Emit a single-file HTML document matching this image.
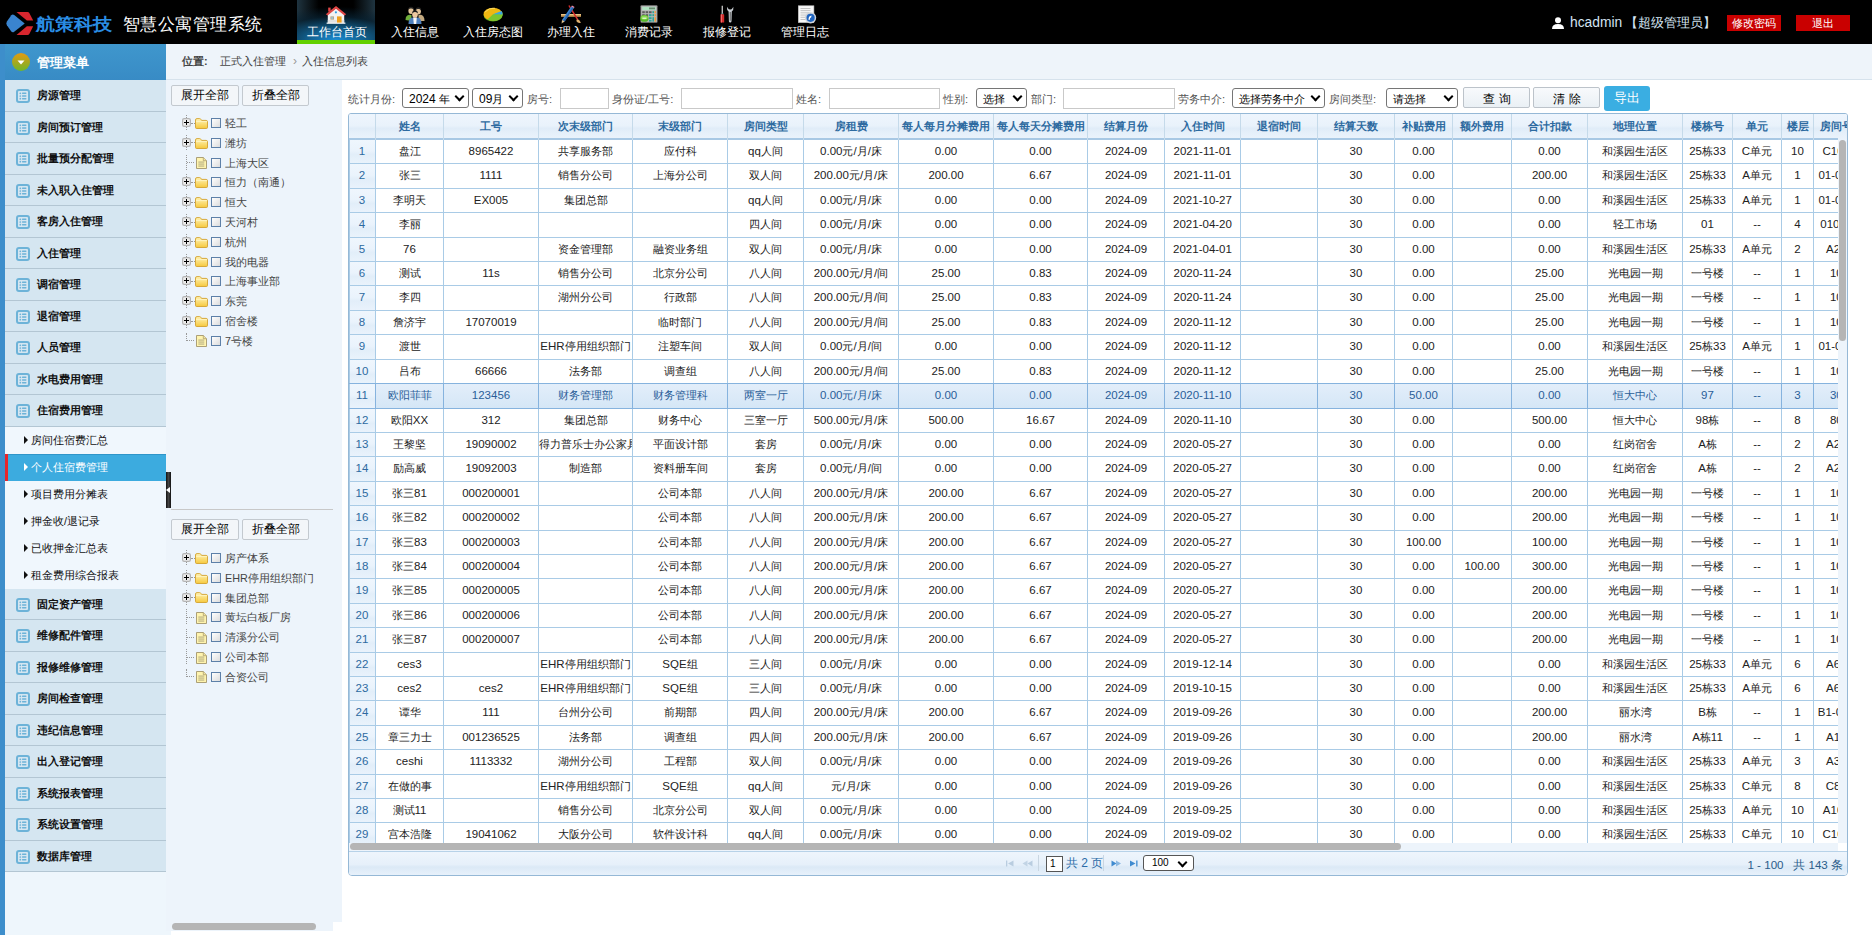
<!DOCTYPE html><html><head><meta charset="utf-8"><title>智慧公寓管理系统</title><style>
*{box-sizing:border-box;margin:0;padding:0}
html,body{width:1872px;height:935px;overflow:hidden;background:#fff}
body{position:relative;font-family:"Liberation Sans",sans-serif;font-size:10.8px;color:#000}
.a{position:absolute}
#hdr{left:0;top:0;width:1872px;height:44px;background:#000}
.logo{left:36px;top:12px;font-size:17.4px;transform:scaleX(1.115);transform-origin:0 50%;font-weight:bold;color:#2a8de4;letter-spacing:0px;line-height:24px;white-space:nowrap}
.title{left:122.5px;top:12px;font-size:17.45px;color:#fff;line-height:24px;white-space:nowrap;letter-spacing:0.5px}
.nav{top:0;height:44px;width:78px}
.nav .t{position:absolute;left:0.5px;width:78px;top:24.5px;text-align:center;color:#fff;font-size:12px;line-height:14px;white-space:nowrap}
.nav svg{position:absolute}
.navact{background:radial-gradient(ellipse 110% 75% at 50% 90%,#1a8ad0 0%,#115c88 35%,rgba(8,34,50,0.75) 70%,rgba(0,0,0,0) 100%),linear-gradient(to right,#1f3440 0%,#000 28%,#000 72%,#1f3440 100%)}
.navact:after{content:"";position:absolute;left:0;bottom:0;width:78px;height:4px;background:#63d000}
.user{top:14.5px;left:1570px;color:#d4e4f2;font-size:13.8px;line-height:16px;white-space:nowrap}
.rbtn{top:15px;height:16px;width:54px;background:#c90000;color:#fff;font-size:10.8px;line-height:16px;text-align:center}
#side{left:0;top:44px;width:166px;height:891px;background:#eef6fc}
#sidestrip{left:0;top:44px;width:5px;height:891px;background:#3d8ecb}
#sidehd{left:5px;top:44px;width:161px;height:36px;background:linear-gradient(#3f97cd,#388bc5)}
.mi{left:5px;width:161px;height:31.5px;background:#d5e6f1;border-bottom:1px solid #b3c6d3}
.mi .t{position:absolute;left:32px;top:0;line-height:30.5px;font-size:10.8px;font-weight:bold;color:#111;white-space:nowrap}
.mi .ic{position:absolute;left:11px;top:9px}
.mi .ic i{position:absolute;left:2px;height:1.4px;width:7px;background:#7fb6dc}
.si{left:5px;width:161px;height:27px;background:#f0f7fd}
.si .t{position:absolute;left:26px;top:0;line-height:27px;font-size:10.8px;color:#111;white-space:nowrap}
.si .ar{position:absolute;left:19px;top:9.5px;width:0;height:0;border-left:4px solid #111;border-top:4px solid transparent;border-bottom:4px solid transparent}
.si.act{background:#3cabdf;box-shadow:inset 0 1px 0 #2f95c9}
.si.act .t{color:#fff}
.si.act .ar{border-left-color:#fff}
.si.act:before{content:"";position:absolute;left:0;top:0;width:3px;height:27px;background:#e8242a}
#crumb{left:166px;top:44px;width:1706px;height:36px;background:#eef4fa;border-bottom:1px solid #d6e2ec}
#crumb span{position:absolute;top:0;line-height:35px;font-size:10.8px;color:#444;white-space:nowrap}
#tree{left:166px;top:80px;width:176px;height:842px;background:#edf4fb}
.tbtn{height:21px;border:1px solid #c3c9cf;border-radius:2px;background:#f3f6f9;font-size:11.8px;line-height:19px;text-align:center;color:#000;width:68px}
.tn{left:182px;height:20px;width:150px}
.tn .tx{position:absolute;left:43px;top:0;line-height:20px;font-size:10.8px;color:#444;white-space:nowrap}
.tn .cb{position:absolute;left:29px;top:5px;width:10px;height:10px;border:1.2px solid #5d80a8;background:linear-gradient(135deg,#ffffff,#dcdcdc)}
.tn .pl{position:absolute;left:0;top:5.5px;width:9px;height:9px;border:1px solid #bbb;border-radius:1.5px;background:#fff}
.tn .pl:before{content:"";position:absolute;left:1.5px;top:3.2px;width:4.5px;height:1px;background:#000}
.tn .pl:after{content:"";position:absolute;left:3.3px;top:1.5px;width:1px;height:4.5px;background:#000}
.fold{position:absolute;left:13px;top:5px;width:13px;height:10px;border-radius:1.5px;background:linear-gradient(#fff2a8,#f5cd4a);border:1px solid #d9a72e}
.fold:before{content:"";position:absolute;left:-1px;top:-3px;width:6px;height:3px;border-radius:1.5px 1.5px 0 0;background:#f9e27d;border:1px solid #d9a72e;border-bottom:none}
.leaf{position:absolute;left:14px;top:4px;width:10px;height:12px;background:#fff4b0;border:1px solid #b9a25a}
.leaf i{position:absolute;left:2px;width:5px;height:1px;background:#b9a25a}
.dv{position:absolute;border-left:1px dotted #999}
.dh{position:absolute;border-top:1px dotted #999}
#main{left:342px;top:80px;width:1530px;height:855px;background:#fff}
.lb{top:89px;line-height:20px;font-size:11.3px;color:#555;white-space:nowrap}
.sel{top:88px;height:20px;border:1px solid #767676;border-radius:3px;background:#fff;font-size:11.3px;line-height:21px;padding-left:6px;color:#000;white-space:nowrap;overflow:hidden}
.sel:after{content:"";position:absolute;right:5px;top:4px;width:5px;height:5px;border-right:2px solid #000;border-bottom:2px solid #000;transform:rotate(45deg)}
.inp{top:88px;height:21px;border:1px solid #c9c9c9;background:#fff}
.btn{top:87px;height:21px;border:1px solid #bcc3ca;border-radius:2px;background:linear-gradient(#f8fafc,#eaf0f5);font-size:11.6px;line-height:21px;text-align:center;color:#000;letter-spacing:4px;text-indent:4px}
#grid{left:348px;top:113px;width:1500px;height:763px;border:1px solid #95b8d6;border-radius:3px 3px 4px 4px;overflow:hidden;background:#fff}
.hc{position:absolute;top:0;height:26px;line-height:25px;text-align:center;font-weight:bold;color:#2d6aa0;font-size:10.8px;white-space:nowrap;overflow:hidden}
.c{position:absolute;height:24.4px;line-height:23px;text-align:center;font-size:10.8px;color:#222;white-space:nowrap;overflow:hidden}
.rn{color:#2d6aa0}
.l{font-size:1.065em}
</style></head><body>
<div id="hdr" class="a">
<svg class="a" style="left:0;top:0" width="36" height="44" viewBox="0 0 36 44">
<path d="M24.7 23.4 L14.2 15 Q12.6 13.8 11.3 15.2 L6.9 21.5 Q5.7 23.4 6.9 25.3 L11.3 31.6 Q12.6 33 14.2 31.8 Z" fill="#3a84cf"/>
<path d="M16.5 11.9 L27.6 11.9 Q28.7 11.9 29.3 12.9 L33.2 20.6 L26.9 20.6 Z" fill="#d8262e"/>
<path d="M16.5 34.9 L27.6 34.9 Q28.7 34.9 29.3 33.9 L33.2 26.2 L26.9 26.2 Z" fill="#d8262e"/>
</svg>
<div class="a logo">航策科技</div>
<div class="a title">智慧公寓管理系统</div>
<div class="a nav navact" style="left:297px"><svg style="left:28px;top:5px" width="22" height="19" viewBox="0 0 22 19">
 <path d="M2.8 9 L11 3.2 L19.2 9 L19.2 18 L2.8 18Z" fill="#f2f2f2"/>
 <path d="M2.8 15 L19.2 15 L19.2 18 L2.8 18Z" fill="#e2e2e2"/>
 <rect x="12" y="11.4" width="4.6" height="6.6" fill="#f0a01e"/>
 <rect x="5.4" y="11.4" width="3.6" height="3.2" fill="#b7a27c"/>
 <rect x="6.2" y="12.1" width="2" height="1.8" fill="#9cc3dc"/>
 <path d="M0.8 9.2 L11 1 L21.2 9.2 L19.4 10.4 L11 3.8 L2.6 10.4Z" fill="#e04645"/>
 <rect x="3.2" y="2.6" width="2.4" height="4" fill="#e04645"/>
 <circle cx="10.9" cy="7.3" r="1.1" fill="#2f9be0"/>
 <rect x="1.6" y="17.6" width="18.8" height="1.2" fill="#fafafa"/>
 </svg><div class="t">工作台首页</div></div>
<div class="a nav" style="left:375px"><svg style="left:30px;top:5px" width="20" height="19" viewBox="0 0 20 19">
 <path d="M0.5 15 Q0.5 10 4.5 9.8 L6.5 10 L6.5 16Z" fill="#6fae3a"/>
 <path d="M13.5 10 L16 9.8 Q19.5 10.5 19.5 16 L13.5 16Z" fill="#c4aa80"/>
 <ellipse cx="6" cy="5.8" rx="2.6" ry="3.2" fill="#e3c49a"/>
 <path d="M3.3 5 Q3.5 1.6 6 1.7 Q8.7 1.7 8.8 5 Q7.5 3.4 6 3.6 Q4.4 3.4 3.3 5Z" fill="#222"/>
 <ellipse cx="13.3" cy="6.3" rx="2.6" ry="3.2" fill="#e3c49a"/>
 <path d="M10.6 5.5 Q10.8 2.1 13.3 2.2 Q16 2.2 16.1 5.5 Q14.8 3.9 13.3 4.1 Q11.7 3.9 10.6 5.5Z" fill="#222"/>
 <path d="M3.5 19 Q3.5 13 7.5 12.5 L12.5 12.5 Q16.5 13 16.5 19Z" fill="#4f80bd"/>
 <path d="M8.2 12.6 L11.8 12.6 L11.2 19 L8.8 19Z" fill="#f6f6f6"/>
 <ellipse cx="10" cy="9.4" rx="2.8" ry="3.3" fill="#edc9a0"/>
 <path d="M7.1 8.6 Q7.2 5.1 10 5.2 Q12.8 5.1 12.9 8.6 Q11.6 6.9 10 7.1 Q8.4 6.9 7.1 8.6Z" fill="#1c1c1c"/>
 </svg><div class="t">入住信息</div></div>
<div class="a nav" style="left:453px"><svg style="left:30px;top:7px" width="20" height="15" viewBox="0 0 20 15">
 <ellipse cx="10" cy="8.3" rx="9.4" ry="6.2" fill="#4c9a1c"/>
 <ellipse cx="10" cy="7.2" rx="9.4" ry="6.5" fill="#f0b812"/>
 <path d="M10 7.2 L19.3 5.8 A9.4 6.5 0 0 1 17 12 A9.4 6.5 0 0 1 4.5 12.6 Z" fill="#7cc52e"/>
 <path d="M10 7.2 L18.6 4 A9.4 6.5 0 0 1 19.4 7.6 Z" fill="#3aa6e0"/>
 <path d="M2 5 Q6 0.5 12 1.2" stroke="#ffe680" stroke-width="1" fill="none" opacity="0.7"/>
 </svg><div class="t">入住房态图</div></div>
<div class="a nav" style="left:531px"><svg style="left:29px;top:5px" width="22" height="19" viewBox="0 0 22 19">
 <path d="M1 9 L21 9 L21 11.8 L1 11.8Z" fill="#c99a55"/>
 <path d="M1 9 L21 9 L21 10 L1 10Z" fill="#e8c488"/>
 <path d="M8.3 0.8 L9.6 0.2 L18.5 14.5 L17.2 15.3Z" fill="#d42b2b"/>
 <path d="M16.8 14.5 Q19.5 14 20.8 17.8 Q18 18.6 16.3 16Z" fill="#e0b070"/>
 <path d="M11.2 1.6 L13.8 3.1 L4.6 16.6 L2 15.1Z" fill="#3a86d4"/>
 <path d="M12.4 2.3 L13.8 3.1 L4.6 16.6 L3.3 15.8Z" fill="#2a62a8"/>
 <path d="M2 15.1 L4.6 16.6 L1.6 18.6Z" fill="#e8c890"/>
 <path d="M1.8 17.5 L2.6 18 L1.6 18.6Z" fill="#222"/>
 <path d="M11.2 1.6 L12 0.5 L14.6 2 L13.8 3.1Z" fill="#ee8aa8"/>
 </svg><div class="t">办理入住</div></div>
<div class="a nav" style="left:609px"><svg style="left:31px;top:5px" width="18" height="18" viewBox="0 0 18 18">
 <rect x="0.5" y="0.3" width="17" height="17.4" rx="1" fill="#8a8a8a"/>
 <rect x="1.3" y="1.1" width="15.4" height="15.8" fill="#b9b9b9"/>
 <rect x="2.2" y="1.9" width="13.6" height="3.2" fill="#aee0c0"/>
 <rect x="9" y="2.5" width="6" height="1.8" fill="#6a8a70"/>
 <g fill="#5c5c5c"><rect x="2.2" y="6.2" width="2.6" height="2"/><rect x="5.6" y="6.2" width="2.6" height="2"/><rect x="9" y="6.2" width="2.6" height="2"/><rect x="2.2" y="9.2" width="2.6" height="2"/><rect x="5.6" y="9.2" width="2.6" height="2"/></g>
 <g fill="#2aa39a"><rect x="12.4" y="6.2" width="1.6" height="2"/><rect x="9" y="9.2" width="2.6" height="2"/><rect x="9" y="12.2" width="2.6" height="2"/><rect x="9" y="15" width="2.6" height="1.6"/><rect x="12.4" y="9.2" width="1.6" height="2"/></g>
 <g fill="#f09a3a"><rect x="14.5" y="6.2" width="1.5" height="2"/><rect x="14.5" y="9.2" width="1.5" height="2"/><rect x="14.5" y="12.2" width="1.5" height="4.4"/><rect x="12.4" y="12.2" width="1.6" height="4.4" fill="#2aa39a"/></g>
 <ellipse cx="4.4" cy="13.4" rx="4.2" ry="3.4" fill="#58b82a"/>
 <ellipse cx="4.4" cy="12.6" rx="3.4" ry="2.2" fill="#8ad650"/>
 <rect x="2.4" y="12.6" width="4" height="1.2" fill="#e8ffe0"/>
 </svg><div class="t">消费记录</div></div>
<div class="a nav" style="left:687px"><svg style="left:32px;top:5px" width="17" height="18" viewBox="0 0 17 18">
 <rect x="2.6" y="0.8" width="1.4" height="8" fill="#9a9a9a"/>
 <rect x="2.9" y="0.8" width="0.6" height="8" fill="#d8d8d8"/>
 <rect x="1.9" y="8.6" width="2.8" height="0.8" fill="#3aa0a0"/>
 <rect x="1.4" y="9.3" width="3.8" height="8.2" rx="0.6" fill="#d32c2c"/>
 <rect x="2" y="9.3" width="1" height="8.2" fill="#ef6a6a"/>
 <path d="M8 1.8 Q7.6 5 9.6 6.4 L9.9 16.3 Q10 17.6 11.2 17.6 Q12.4 17.6 12.5 16.3 L12.8 6.4 Q14.8 5 14.4 1.8 L13.2 3.6 Q12.8 4.6 11.2 4.6 Q9.6 4.6 9.2 3.6Z" fill="#c8cdd2"/>
 <path d="M10.7 7 L11.7 7 L11.6 15.8 L10.8 15.8Z" fill="#555"/>
 </svg><div class="t">报修登记</div></div>
<div class="a nav" style="left:765px"><svg style="left:33px;top:5px" width="19" height="19" viewBox="0 0 19 19">
 <rect x="0.3" y="0.8" width="15.6" height="16.8" fill="#f8f8f8"/>
 <rect x="0.3" y="0.8" width="15.6" height="16.8" fill="none" stroke="#c4c4c4" stroke-width="0.6"/>
 <g fill="#bdbdbd"><rect x="2.5" y="3" width="10" height="0.9"/><rect x="2.5" y="5.2" width="10" height="0.9"/><rect x="2.5" y="7.4" width="9" height="0.9"/><rect x="2.5" y="9.6" width="6" height="0.9"/><rect x="2.5" y="11.8" width="5" height="0.9"/><rect x="2.5" y="14" width="5" height="0.9"/></g>
 <circle cx="12.6" cy="12.8" r="5.6" fill="#cfd3d8"/>
 <circle cx="12.6" cy="12.8" r="4.1" fill="#1f64c0"/>
 <path d="M10.6 15 Q10.2 11 13.6 10.6 L13.2 12.2 Q11.8 12.6 11.6 15Z" fill="#fff"/>
 </svg><div class="t">管理日志</div></div>
<svg class="a" style="left:1552px;top:17px" width="12" height="12" viewBox="0 0 12 12">
<circle cx="6" cy="3.3" r="3" fill="#fff"/><path d="M0 12 Q0 7 6 7 Q12 7 12 12Z" fill="#fff"/></svg>
<div class="a user">hcadmin</div><div class="a user" style="left:1625px;font-size:12.8px;top:14.5px">【超级管理员】</div>
<div class="a rbtn" style="left:1727px">修改密码</div>
<div class="a rbtn" style="left:1796px">退出</div>
</div>
<div id="side" class="a"></div><div id="sidestrip" class="a"></div>
<div id="sidehd" class="a"></div>
<svg class="a" style="left:12px;top:53px" width="18" height="18" viewBox="0 0 18 18">
<defs><linearGradient id="og" x1="0" y1="0" x2="0" y2="1"><stop offset="0" stop-color="#e39a12"/><stop offset="1" stop-color="#6fb62a"/></linearGradient></defs>
<circle cx="9" cy="9" r="9" fill="url(#og)"/><path d="M5.5 7.5 L12.5 7.5 L9 11.5Z" fill="#fff"/></svg>
<div class="a" style="left:37px;top:45px;line-height:36px;font-size:12.6px;font-weight:bold;color:#fff;white-space:nowrap">管理菜单</div>
<div class="a mi" style="top:80.0px"><svg class="ic" width="14" height="14" viewBox="0 0 14 14"><rect x="1" y="1" width="12" height="12" rx="2" fill="none" stroke="#6db3d8" stroke-width="2"/><g fill="#6db3d8"><circle cx="4.3" cy="4.3" r="0.85"/><circle cx="4.3" cy="7" r="0.85"/><circle cx="4.3" cy="9.7" r="0.85"/><rect x="5.9" y="3.6" width="4.6" height="1.4" rx="0.7"/><rect x="5.9" y="6.3" width="4.6" height="1.4" rx="0.7"/><rect x="5.9" y="9" width="4.6" height="1.4" rx="0.7"/></g></svg><div class="t">房源管理</div></div>
<div class="a mi" style="top:111.5px"><svg class="ic" width="14" height="14" viewBox="0 0 14 14"><rect x="1" y="1" width="12" height="12" rx="2" fill="none" stroke="#6db3d8" stroke-width="2"/><g fill="#6db3d8"><circle cx="4.3" cy="4.3" r="0.85"/><circle cx="4.3" cy="7" r="0.85"/><circle cx="4.3" cy="9.7" r="0.85"/><rect x="5.9" y="3.6" width="4.6" height="1.4" rx="0.7"/><rect x="5.9" y="6.3" width="4.6" height="1.4" rx="0.7"/><rect x="5.9" y="9" width="4.6" height="1.4" rx="0.7"/></g></svg><div class="t">房间预订管理</div></div>
<div class="a mi" style="top:143.0px"><svg class="ic" width="14" height="14" viewBox="0 0 14 14"><rect x="1" y="1" width="12" height="12" rx="2" fill="none" stroke="#6db3d8" stroke-width="2"/><g fill="#6db3d8"><circle cx="4.3" cy="4.3" r="0.85"/><circle cx="4.3" cy="7" r="0.85"/><circle cx="4.3" cy="9.7" r="0.85"/><rect x="5.9" y="3.6" width="4.6" height="1.4" rx="0.7"/><rect x="5.9" y="6.3" width="4.6" height="1.4" rx="0.7"/><rect x="5.9" y="9" width="4.6" height="1.4" rx="0.7"/></g></svg><div class="t">批量预分配管理</div></div>
<div class="a mi" style="top:174.5px"><svg class="ic" width="14" height="14" viewBox="0 0 14 14"><rect x="1" y="1" width="12" height="12" rx="2" fill="none" stroke="#6db3d8" stroke-width="2"/><g fill="#6db3d8"><circle cx="4.3" cy="4.3" r="0.85"/><circle cx="4.3" cy="7" r="0.85"/><circle cx="4.3" cy="9.7" r="0.85"/><rect x="5.9" y="3.6" width="4.6" height="1.4" rx="0.7"/><rect x="5.9" y="6.3" width="4.6" height="1.4" rx="0.7"/><rect x="5.9" y="9" width="4.6" height="1.4" rx="0.7"/></g></svg><div class="t">未入职入住管理</div></div>
<div class="a mi" style="top:206.0px"><svg class="ic" width="14" height="14" viewBox="0 0 14 14"><rect x="1" y="1" width="12" height="12" rx="2" fill="none" stroke="#6db3d8" stroke-width="2"/><g fill="#6db3d8"><circle cx="4.3" cy="4.3" r="0.85"/><circle cx="4.3" cy="7" r="0.85"/><circle cx="4.3" cy="9.7" r="0.85"/><rect x="5.9" y="3.6" width="4.6" height="1.4" rx="0.7"/><rect x="5.9" y="6.3" width="4.6" height="1.4" rx="0.7"/><rect x="5.9" y="9" width="4.6" height="1.4" rx="0.7"/></g></svg><div class="t">客房入住管理</div></div>
<div class="a mi" style="top:237.5px"><svg class="ic" width="14" height="14" viewBox="0 0 14 14"><rect x="1" y="1" width="12" height="12" rx="2" fill="none" stroke="#6db3d8" stroke-width="2"/><g fill="#6db3d8"><circle cx="4.3" cy="4.3" r="0.85"/><circle cx="4.3" cy="7" r="0.85"/><circle cx="4.3" cy="9.7" r="0.85"/><rect x="5.9" y="3.6" width="4.6" height="1.4" rx="0.7"/><rect x="5.9" y="6.3" width="4.6" height="1.4" rx="0.7"/><rect x="5.9" y="9" width="4.6" height="1.4" rx="0.7"/></g></svg><div class="t">入住管理</div></div>
<div class="a mi" style="top:269.0px"><svg class="ic" width="14" height="14" viewBox="0 0 14 14"><rect x="1" y="1" width="12" height="12" rx="2" fill="none" stroke="#6db3d8" stroke-width="2"/><g fill="#6db3d8"><circle cx="4.3" cy="4.3" r="0.85"/><circle cx="4.3" cy="7" r="0.85"/><circle cx="4.3" cy="9.7" r="0.85"/><rect x="5.9" y="3.6" width="4.6" height="1.4" rx="0.7"/><rect x="5.9" y="6.3" width="4.6" height="1.4" rx="0.7"/><rect x="5.9" y="9" width="4.6" height="1.4" rx="0.7"/></g></svg><div class="t">调宿管理</div></div>
<div class="a mi" style="top:300.5px"><svg class="ic" width="14" height="14" viewBox="0 0 14 14"><rect x="1" y="1" width="12" height="12" rx="2" fill="none" stroke="#6db3d8" stroke-width="2"/><g fill="#6db3d8"><circle cx="4.3" cy="4.3" r="0.85"/><circle cx="4.3" cy="7" r="0.85"/><circle cx="4.3" cy="9.7" r="0.85"/><rect x="5.9" y="3.6" width="4.6" height="1.4" rx="0.7"/><rect x="5.9" y="6.3" width="4.6" height="1.4" rx="0.7"/><rect x="5.9" y="9" width="4.6" height="1.4" rx="0.7"/></g></svg><div class="t">退宿管理</div></div>
<div class="a mi" style="top:332.0px"><svg class="ic" width="14" height="14" viewBox="0 0 14 14"><rect x="1" y="1" width="12" height="12" rx="2" fill="none" stroke="#6db3d8" stroke-width="2"/><g fill="#6db3d8"><circle cx="4.3" cy="4.3" r="0.85"/><circle cx="4.3" cy="7" r="0.85"/><circle cx="4.3" cy="9.7" r="0.85"/><rect x="5.9" y="3.6" width="4.6" height="1.4" rx="0.7"/><rect x="5.9" y="6.3" width="4.6" height="1.4" rx="0.7"/><rect x="5.9" y="9" width="4.6" height="1.4" rx="0.7"/></g></svg><div class="t">人员管理</div></div>
<div class="a mi" style="top:363.5px"><svg class="ic" width="14" height="14" viewBox="0 0 14 14"><rect x="1" y="1" width="12" height="12" rx="2" fill="none" stroke="#6db3d8" stroke-width="2"/><g fill="#6db3d8"><circle cx="4.3" cy="4.3" r="0.85"/><circle cx="4.3" cy="7" r="0.85"/><circle cx="4.3" cy="9.7" r="0.85"/><rect x="5.9" y="3.6" width="4.6" height="1.4" rx="0.7"/><rect x="5.9" y="6.3" width="4.6" height="1.4" rx="0.7"/><rect x="5.9" y="9" width="4.6" height="1.4" rx="0.7"/></g></svg><div class="t">水电费用管理</div></div>
<div class="a mi" style="top:395.0px"><svg class="ic" width="14" height="14" viewBox="0 0 14 14"><rect x="1" y="1" width="12" height="12" rx="2" fill="none" stroke="#6db3d8" stroke-width="2"/><g fill="#6db3d8"><circle cx="4.3" cy="4.3" r="0.85"/><circle cx="4.3" cy="7" r="0.85"/><circle cx="4.3" cy="9.7" r="0.85"/><rect x="5.9" y="3.6" width="4.6" height="1.4" rx="0.7"/><rect x="5.9" y="6.3" width="4.6" height="1.4" rx="0.7"/><rect x="5.9" y="9" width="4.6" height="1.4" rx="0.7"/></g></svg><div class="t">住宿费用管理</div></div>
<div class="a si" style="top:426.5px"><div class="ar"></div><div class="t">房间住宿费汇总</div></div>
<div class="a si act" style="top:453.5px"><div class="ar"></div><div class="t">个人住宿费管理</div></div>
<div class="a si" style="top:480.5px"><div class="ar"></div><div class="t">项目费用分摊表</div></div>
<div class="a si" style="top:507.5px"><div class="ar"></div><div class="t">押金收/退记录</div></div>
<div class="a si" style="top:534.5px"><div class="ar"></div><div class="t">已收押金汇总表</div></div>
<div class="a si" style="top:561.5px"><div class="ar"></div><div class="t">租金费用综合报表</div></div>
<div class="a mi" style="top:588.5px"><svg class="ic" width="14" height="14" viewBox="0 0 14 14"><rect x="1" y="1" width="12" height="12" rx="2" fill="none" stroke="#6db3d8" stroke-width="2"/><g fill="#6db3d8"><circle cx="4.3" cy="4.3" r="0.85"/><circle cx="4.3" cy="7" r="0.85"/><circle cx="4.3" cy="9.7" r="0.85"/><rect x="5.9" y="3.6" width="4.6" height="1.4" rx="0.7"/><rect x="5.9" y="6.3" width="4.6" height="1.4" rx="0.7"/><rect x="5.9" y="9" width="4.6" height="1.4" rx="0.7"/></g></svg><div class="t">固定资产管理</div></div>
<div class="a mi" style="top:620.0px"><svg class="ic" width="14" height="14" viewBox="0 0 14 14"><rect x="1" y="1" width="12" height="12" rx="2" fill="none" stroke="#6db3d8" stroke-width="2"/><g fill="#6db3d8"><circle cx="4.3" cy="4.3" r="0.85"/><circle cx="4.3" cy="7" r="0.85"/><circle cx="4.3" cy="9.7" r="0.85"/><rect x="5.9" y="3.6" width="4.6" height="1.4" rx="0.7"/><rect x="5.9" y="6.3" width="4.6" height="1.4" rx="0.7"/><rect x="5.9" y="9" width="4.6" height="1.4" rx="0.7"/></g></svg><div class="t">维修配件管理</div></div>
<div class="a mi" style="top:651.5px"><svg class="ic" width="14" height="14" viewBox="0 0 14 14"><rect x="1" y="1" width="12" height="12" rx="2" fill="none" stroke="#6db3d8" stroke-width="2"/><g fill="#6db3d8"><circle cx="4.3" cy="4.3" r="0.85"/><circle cx="4.3" cy="7" r="0.85"/><circle cx="4.3" cy="9.7" r="0.85"/><rect x="5.9" y="3.6" width="4.6" height="1.4" rx="0.7"/><rect x="5.9" y="6.3" width="4.6" height="1.4" rx="0.7"/><rect x="5.9" y="9" width="4.6" height="1.4" rx="0.7"/></g></svg><div class="t">报修维修管理</div></div>
<div class="a mi" style="top:683.0px"><svg class="ic" width="14" height="14" viewBox="0 0 14 14"><rect x="1" y="1" width="12" height="12" rx="2" fill="none" stroke="#6db3d8" stroke-width="2"/><g fill="#6db3d8"><circle cx="4.3" cy="4.3" r="0.85"/><circle cx="4.3" cy="7" r="0.85"/><circle cx="4.3" cy="9.7" r="0.85"/><rect x="5.9" y="3.6" width="4.6" height="1.4" rx="0.7"/><rect x="5.9" y="6.3" width="4.6" height="1.4" rx="0.7"/><rect x="5.9" y="9" width="4.6" height="1.4" rx="0.7"/></g></svg><div class="t">房间检查管理</div></div>
<div class="a mi" style="top:714.5px"><svg class="ic" width="14" height="14" viewBox="0 0 14 14"><rect x="1" y="1" width="12" height="12" rx="2" fill="none" stroke="#6db3d8" stroke-width="2"/><g fill="#6db3d8"><circle cx="4.3" cy="4.3" r="0.85"/><circle cx="4.3" cy="7" r="0.85"/><circle cx="4.3" cy="9.7" r="0.85"/><rect x="5.9" y="3.6" width="4.6" height="1.4" rx="0.7"/><rect x="5.9" y="6.3" width="4.6" height="1.4" rx="0.7"/><rect x="5.9" y="9" width="4.6" height="1.4" rx="0.7"/></g></svg><div class="t">违纪信息管理</div></div>
<div class="a mi" style="top:746.0px"><svg class="ic" width="14" height="14" viewBox="0 0 14 14"><rect x="1" y="1" width="12" height="12" rx="2" fill="none" stroke="#6db3d8" stroke-width="2"/><g fill="#6db3d8"><circle cx="4.3" cy="4.3" r="0.85"/><circle cx="4.3" cy="7" r="0.85"/><circle cx="4.3" cy="9.7" r="0.85"/><rect x="5.9" y="3.6" width="4.6" height="1.4" rx="0.7"/><rect x="5.9" y="6.3" width="4.6" height="1.4" rx="0.7"/><rect x="5.9" y="9" width="4.6" height="1.4" rx="0.7"/></g></svg><div class="t">出入登记管理</div></div>
<div class="a mi" style="top:777.5px"><svg class="ic" width="14" height="14" viewBox="0 0 14 14"><rect x="1" y="1" width="12" height="12" rx="2" fill="none" stroke="#6db3d8" stroke-width="2"/><g fill="#6db3d8"><circle cx="4.3" cy="4.3" r="0.85"/><circle cx="4.3" cy="7" r="0.85"/><circle cx="4.3" cy="9.7" r="0.85"/><rect x="5.9" y="3.6" width="4.6" height="1.4" rx="0.7"/><rect x="5.9" y="6.3" width="4.6" height="1.4" rx="0.7"/><rect x="5.9" y="9" width="4.6" height="1.4" rx="0.7"/></g></svg><div class="t">系统报表管理</div></div>
<div class="a mi" style="top:809.0px"><svg class="ic" width="14" height="14" viewBox="0 0 14 14"><rect x="1" y="1" width="12" height="12" rx="2" fill="none" stroke="#6db3d8" stroke-width="2"/><g fill="#6db3d8"><circle cx="4.3" cy="4.3" r="0.85"/><circle cx="4.3" cy="7" r="0.85"/><circle cx="4.3" cy="9.7" r="0.85"/><rect x="5.9" y="3.6" width="4.6" height="1.4" rx="0.7"/><rect x="5.9" y="6.3" width="4.6" height="1.4" rx="0.7"/><rect x="5.9" y="9" width="4.6" height="1.4" rx="0.7"/></g></svg><div class="t">系统设置管理</div></div>
<div class="a mi" style="top:840.5px"><svg class="ic" width="14" height="14" viewBox="0 0 14 14"><rect x="1" y="1" width="12" height="12" rx="2" fill="none" stroke="#6db3d8" stroke-width="2"/><g fill="#6db3d8"><circle cx="4.3" cy="4.3" r="0.85"/><circle cx="4.3" cy="7" r="0.85"/><circle cx="4.3" cy="9.7" r="0.85"/><rect x="5.9" y="3.6" width="4.6" height="1.4" rx="0.7"/><rect x="5.9" y="6.3" width="4.6" height="1.4" rx="0.7"/><rect x="5.9" y="9" width="4.6" height="1.4" rx="0.7"/></g></svg><div class="t">数据库管理</div></div>
<div id="crumb" class="a"><span style="left:16px;font-weight:bold;color:#444">位置:</span><span style="left:54px">正式入住管理</span><span style="left:127px;color:#999;font-size:12px">›</span><span style="left:136px">入住信息列表</span></div>
<div id="tree" class="a"></div>
<div class="a" style="left:166px;top:472px;width:5px;height:36px;background:linear-gradient(to right,#111,#444,#111)"></div>
<div class="a" style="left:166px;top:487px;width:0;height:0;border-right:4px solid #fff;border-top:3.5px solid transparent;border-bottom:3.5px solid transparent"></div>
<div class="a" style="left:171px;top:509px;width:162px;height:1px;background:#c8c8c8"></div>
<div class="a" style="left:166px;top:922px;width:167px;height:9px;background:#edf4fb"></div>
<div class="a" style="left:172px;top:923px;width:144px;height:7px;border-radius:4px;background:#b5b5b5"></div>
<div class="a" style="left:171px;top:931px;width:171px;height:4px;background:#fff"></div><div class="a" style="left:166px;top:931px;width:5px;height:4px;background:#eef6fc"></div>
<div class="a tbtn" style="left:171px;top:85px">展开全部</div>
<div class="a tbtn" style="left:242px;top:85px;width:67px">折叠全部</div>
<div class="a tbtn" style="left:171px;top:519px">展开全部</div>
<div class="a tbtn" style="left:242px;top:519px;width:67px">折叠全部</div>
<svg width="0" height="0" style="position:absolute"><defs><linearGradient id="fgr" x1="0" y1="0" x2="0" y2="1"><stop offset="0" stop-color="#fff4b8"/><stop offset="1" stop-color="#f6c93e"/></linearGradient></defs></svg>
<div class="a tn" style="top:113.00px"><svg class="a" style="left:0;top:5px" width="9" height="9" viewBox="0 0 9 9"><rect x="0.6" y="0.6" width="7.8" height="7.8" rx="1.6" fill="#ececec" stroke="#b4b4b4" stroke-width="1.2"/><rect x="2" y="4" width="5" height="1" fill="#000"/><rect x="4" y="2" width="1" height="5" fill="#000"/></svg><svg class="a" style="left:13px;top:4.8px" width="13" height="11" viewBox="0 0 13 11"><path d="M0.5 2 Q0.5 0.6 2 0.6 L4.6 0.6 Q5.6 0.6 6.1 1.6 L6.6 2.4 L11.2 2.4 Q12.5 2.4 12.5 3.8 L12.5 9.4 Q12.5 10.5 11.4 10.5 L1.6 10.5 Q0.5 10.5 0.5 9.4Z" fill="url(#fgr)" stroke="#d2a22e" stroke-width="0.9"/><path d="M1 3.6 L12 3.6" stroke="#fff6c8" stroke-width="0.8"/></svg><div class="cb"></div><div class="tx">轻工</div><div class="dv" style="left:4px;top:2px;height:3px"></div><div class="dv" style="left:4px;top:14px;height:3px"></div><div class="dh" style="left:9px;top:9.5px;width:4px"></div></div>
<div class="a tn" style="top:132.80px"><svg class="a" style="left:0;top:5px" width="9" height="9" viewBox="0 0 9 9"><rect x="0.6" y="0.6" width="7.8" height="7.8" rx="1.6" fill="#ececec" stroke="#b4b4b4" stroke-width="1.2"/><rect x="2" y="4" width="5" height="1" fill="#000"/><rect x="4" y="2" width="1" height="5" fill="#000"/></svg><svg class="a" style="left:13px;top:4.8px" width="13" height="11" viewBox="0 0 13 11"><path d="M0.5 2 Q0.5 0.6 2 0.6 L4.6 0.6 Q5.6 0.6 6.1 1.6 L6.6 2.4 L11.2 2.4 Q12.5 2.4 12.5 3.8 L12.5 9.4 Q12.5 10.5 11.4 10.5 L1.6 10.5 Q0.5 10.5 0.5 9.4Z" fill="url(#fgr)" stroke="#d2a22e" stroke-width="0.9"/><path d="M1 3.6 L12 3.6" stroke="#fff6c8" stroke-width="0.8"/></svg><div class="cb"></div><div class="tx">潍坊</div><div class="dv" style="left:4px;top:2px;height:3px"></div><div class="dv" style="left:4px;top:14px;height:3px"></div><div class="dh" style="left:9px;top:9.5px;width:4px"></div></div>
<div class="a tn" style="top:152.60px"><svg class="a" style="left:14px;top:4.5px" width="11" height="12" viewBox="0 0 11 12"><path d="M0.5 0.5 L7.3 0.5 L10.5 3.7 L10.5 11.5 L0.5 11.5Z" fill="#fff4ae" stroke="#a4966c" stroke-width="0.9"/><path d="M7.3 0.5 L7.3 3.7 L10.5 3.7" fill="#f3e6a0" stroke="#a4966c" stroke-width="0.7"/><g fill="#a8a07a"><rect x="2.3" y="4.6" width="6" height="0.9"/><rect x="2.3" y="6.6" width="6" height="0.9"/><rect x="2.3" y="8.6" width="6" height="0.9"/></g></svg><div class="cb"></div><div class="tx">上海大区</div><div class="dv" style="left:4px;top:2px;height:15px"></div><div class="dh" style="left:5px;top:9.5px;width:7px"></div></div>
<div class="a tn" style="top:172.40px"><svg class="a" style="left:0;top:5px" width="9" height="9" viewBox="0 0 9 9"><rect x="0.6" y="0.6" width="7.8" height="7.8" rx="1.6" fill="#ececec" stroke="#b4b4b4" stroke-width="1.2"/><rect x="2" y="4" width="5" height="1" fill="#000"/><rect x="4" y="2" width="1" height="5" fill="#000"/></svg><svg class="a" style="left:13px;top:4.8px" width="13" height="11" viewBox="0 0 13 11"><path d="M0.5 2 Q0.5 0.6 2 0.6 L4.6 0.6 Q5.6 0.6 6.1 1.6 L6.6 2.4 L11.2 2.4 Q12.5 2.4 12.5 3.8 L12.5 9.4 Q12.5 10.5 11.4 10.5 L1.6 10.5 Q0.5 10.5 0.5 9.4Z" fill="url(#fgr)" stroke="#d2a22e" stroke-width="0.9"/><path d="M1 3.6 L12 3.6" stroke="#fff6c8" stroke-width="0.8"/></svg><div class="cb"></div><div class="tx">恒力（南通）</div><div class="dv" style="left:4px;top:2px;height:3px"></div><div class="dv" style="left:4px;top:14px;height:3px"></div><div class="dh" style="left:9px;top:9.5px;width:4px"></div></div>
<div class="a tn" style="top:192.20px"><svg class="a" style="left:0;top:5px" width="9" height="9" viewBox="0 0 9 9"><rect x="0.6" y="0.6" width="7.8" height="7.8" rx="1.6" fill="#ececec" stroke="#b4b4b4" stroke-width="1.2"/><rect x="2" y="4" width="5" height="1" fill="#000"/><rect x="4" y="2" width="1" height="5" fill="#000"/></svg><svg class="a" style="left:13px;top:4.8px" width="13" height="11" viewBox="0 0 13 11"><path d="M0.5 2 Q0.5 0.6 2 0.6 L4.6 0.6 Q5.6 0.6 6.1 1.6 L6.6 2.4 L11.2 2.4 Q12.5 2.4 12.5 3.8 L12.5 9.4 Q12.5 10.5 11.4 10.5 L1.6 10.5 Q0.5 10.5 0.5 9.4Z" fill="url(#fgr)" stroke="#d2a22e" stroke-width="0.9"/><path d="M1 3.6 L12 3.6" stroke="#fff6c8" stroke-width="0.8"/></svg><div class="cb"></div><div class="tx">恒大</div><div class="dv" style="left:4px;top:2px;height:3px"></div><div class="dv" style="left:4px;top:14px;height:3px"></div><div class="dh" style="left:9px;top:9.5px;width:4px"></div></div>
<div class="a tn" style="top:212.00px"><svg class="a" style="left:0;top:5px" width="9" height="9" viewBox="0 0 9 9"><rect x="0.6" y="0.6" width="7.8" height="7.8" rx="1.6" fill="#ececec" stroke="#b4b4b4" stroke-width="1.2"/><rect x="2" y="4" width="5" height="1" fill="#000"/><rect x="4" y="2" width="1" height="5" fill="#000"/></svg><svg class="a" style="left:13px;top:4.8px" width="13" height="11" viewBox="0 0 13 11"><path d="M0.5 2 Q0.5 0.6 2 0.6 L4.6 0.6 Q5.6 0.6 6.1 1.6 L6.6 2.4 L11.2 2.4 Q12.5 2.4 12.5 3.8 L12.5 9.4 Q12.5 10.5 11.4 10.5 L1.6 10.5 Q0.5 10.5 0.5 9.4Z" fill="url(#fgr)" stroke="#d2a22e" stroke-width="0.9"/><path d="M1 3.6 L12 3.6" stroke="#fff6c8" stroke-width="0.8"/></svg><div class="cb"></div><div class="tx">天河村</div><div class="dv" style="left:4px;top:2px;height:3px"></div><div class="dv" style="left:4px;top:14px;height:3px"></div><div class="dh" style="left:9px;top:9.5px;width:4px"></div></div>
<div class="a tn" style="top:231.80px"><svg class="a" style="left:0;top:5px" width="9" height="9" viewBox="0 0 9 9"><rect x="0.6" y="0.6" width="7.8" height="7.8" rx="1.6" fill="#ececec" stroke="#b4b4b4" stroke-width="1.2"/><rect x="2" y="4" width="5" height="1" fill="#000"/><rect x="4" y="2" width="1" height="5" fill="#000"/></svg><svg class="a" style="left:13px;top:4.8px" width="13" height="11" viewBox="0 0 13 11"><path d="M0.5 2 Q0.5 0.6 2 0.6 L4.6 0.6 Q5.6 0.6 6.1 1.6 L6.6 2.4 L11.2 2.4 Q12.5 2.4 12.5 3.8 L12.5 9.4 Q12.5 10.5 11.4 10.5 L1.6 10.5 Q0.5 10.5 0.5 9.4Z" fill="url(#fgr)" stroke="#d2a22e" stroke-width="0.9"/><path d="M1 3.6 L12 3.6" stroke="#fff6c8" stroke-width="0.8"/></svg><div class="cb"></div><div class="tx">杭州</div><div class="dv" style="left:4px;top:2px;height:3px"></div><div class="dv" style="left:4px;top:14px;height:3px"></div><div class="dh" style="left:9px;top:9.5px;width:4px"></div></div>
<div class="a tn" style="top:251.60px"><svg class="a" style="left:0;top:5px" width="9" height="9" viewBox="0 0 9 9"><rect x="0.6" y="0.6" width="7.8" height="7.8" rx="1.6" fill="#ececec" stroke="#b4b4b4" stroke-width="1.2"/><rect x="2" y="4" width="5" height="1" fill="#000"/><rect x="4" y="2" width="1" height="5" fill="#000"/></svg><svg class="a" style="left:13px;top:4.8px" width="13" height="11" viewBox="0 0 13 11"><path d="M0.5 2 Q0.5 0.6 2 0.6 L4.6 0.6 Q5.6 0.6 6.1 1.6 L6.6 2.4 L11.2 2.4 Q12.5 2.4 12.5 3.8 L12.5 9.4 Q12.5 10.5 11.4 10.5 L1.6 10.5 Q0.5 10.5 0.5 9.4Z" fill="url(#fgr)" stroke="#d2a22e" stroke-width="0.9"/><path d="M1 3.6 L12 3.6" stroke="#fff6c8" stroke-width="0.8"/></svg><div class="cb"></div><div class="tx">我的电器</div><div class="dv" style="left:4px;top:2px;height:3px"></div><div class="dv" style="left:4px;top:14px;height:3px"></div><div class="dh" style="left:9px;top:9.5px;width:4px"></div></div>
<div class="a tn" style="top:271.40px"><svg class="a" style="left:0;top:5px" width="9" height="9" viewBox="0 0 9 9"><rect x="0.6" y="0.6" width="7.8" height="7.8" rx="1.6" fill="#ececec" stroke="#b4b4b4" stroke-width="1.2"/><rect x="2" y="4" width="5" height="1" fill="#000"/><rect x="4" y="2" width="1" height="5" fill="#000"/></svg><svg class="a" style="left:13px;top:4.8px" width="13" height="11" viewBox="0 0 13 11"><path d="M0.5 2 Q0.5 0.6 2 0.6 L4.6 0.6 Q5.6 0.6 6.1 1.6 L6.6 2.4 L11.2 2.4 Q12.5 2.4 12.5 3.8 L12.5 9.4 Q12.5 10.5 11.4 10.5 L1.6 10.5 Q0.5 10.5 0.5 9.4Z" fill="url(#fgr)" stroke="#d2a22e" stroke-width="0.9"/><path d="M1 3.6 L12 3.6" stroke="#fff6c8" stroke-width="0.8"/></svg><div class="cb"></div><div class="tx">上海事业部</div><div class="dv" style="left:4px;top:2px;height:3px"></div><div class="dv" style="left:4px;top:14px;height:3px"></div><div class="dh" style="left:9px;top:9.5px;width:4px"></div></div>
<div class="a tn" style="top:291.20px"><svg class="a" style="left:0;top:5px" width="9" height="9" viewBox="0 0 9 9"><rect x="0.6" y="0.6" width="7.8" height="7.8" rx="1.6" fill="#ececec" stroke="#b4b4b4" stroke-width="1.2"/><rect x="2" y="4" width="5" height="1" fill="#000"/><rect x="4" y="2" width="1" height="5" fill="#000"/></svg><svg class="a" style="left:13px;top:4.8px" width="13" height="11" viewBox="0 0 13 11"><path d="M0.5 2 Q0.5 0.6 2 0.6 L4.6 0.6 Q5.6 0.6 6.1 1.6 L6.6 2.4 L11.2 2.4 Q12.5 2.4 12.5 3.8 L12.5 9.4 Q12.5 10.5 11.4 10.5 L1.6 10.5 Q0.5 10.5 0.5 9.4Z" fill="url(#fgr)" stroke="#d2a22e" stroke-width="0.9"/><path d="M1 3.6 L12 3.6" stroke="#fff6c8" stroke-width="0.8"/></svg><div class="cb"></div><div class="tx">东莞</div><div class="dv" style="left:4px;top:2px;height:3px"></div><div class="dv" style="left:4px;top:14px;height:3px"></div><div class="dh" style="left:9px;top:9.5px;width:4px"></div></div>
<div class="a tn" style="top:311.00px"><svg class="a" style="left:0;top:5px" width="9" height="9" viewBox="0 0 9 9"><rect x="0.6" y="0.6" width="7.8" height="7.8" rx="1.6" fill="#ececec" stroke="#b4b4b4" stroke-width="1.2"/><rect x="2" y="4" width="5" height="1" fill="#000"/><rect x="4" y="2" width="1" height="5" fill="#000"/></svg><svg class="a" style="left:13px;top:4.8px" width="13" height="11" viewBox="0 0 13 11"><path d="M0.5 2 Q0.5 0.6 2 0.6 L4.6 0.6 Q5.6 0.6 6.1 1.6 L6.6 2.4 L11.2 2.4 Q12.5 2.4 12.5 3.8 L12.5 9.4 Q12.5 10.5 11.4 10.5 L1.6 10.5 Q0.5 10.5 0.5 9.4Z" fill="url(#fgr)" stroke="#d2a22e" stroke-width="0.9"/><path d="M1 3.6 L12 3.6" stroke="#fff6c8" stroke-width="0.8"/></svg><div class="cb"></div><div class="tx">宿舍楼</div><div class="dv" style="left:4px;top:2px;height:3px"></div><div class="dv" style="left:4px;top:14px;height:3px"></div><div class="dh" style="left:9px;top:9.5px;width:4px"></div></div>
<div class="a tn" style="top:330.80px"><svg class="a" style="left:14px;top:4.5px" width="11" height="12" viewBox="0 0 11 12"><path d="M0.5 0.5 L7.3 0.5 L10.5 3.7 L10.5 11.5 L0.5 11.5Z" fill="#fff4ae" stroke="#a4966c" stroke-width="0.9"/><path d="M7.3 0.5 L7.3 3.7 L10.5 3.7" fill="#f3e6a0" stroke="#a4966c" stroke-width="0.7"/><g fill="#a8a07a"><rect x="2.3" y="4.6" width="6" height="0.9"/><rect x="2.3" y="6.6" width="6" height="0.9"/><rect x="2.3" y="8.6" width="6" height="0.9"/></g></svg><div class="cb"></div><div class="tx">7号楼</div><div class="dv" style="left:4px;top:2px;height:8px"></div><div class="dh" style="left:5px;top:9.5px;width:7px"></div></div>
<div class="a tn" style="top:548.00px"><svg class="a" style="left:0;top:5px" width="9" height="9" viewBox="0 0 9 9"><rect x="0.6" y="0.6" width="7.8" height="7.8" rx="1.6" fill="#ececec" stroke="#b4b4b4" stroke-width="1.2"/><rect x="2" y="4" width="5" height="1" fill="#000"/><rect x="4" y="2" width="1" height="5" fill="#000"/></svg><svg class="a" style="left:13px;top:4.8px" width="13" height="11" viewBox="0 0 13 11"><path d="M0.5 2 Q0.5 0.6 2 0.6 L4.6 0.6 Q5.6 0.6 6.1 1.6 L6.6 2.4 L11.2 2.4 Q12.5 2.4 12.5 3.8 L12.5 9.4 Q12.5 10.5 11.4 10.5 L1.6 10.5 Q0.5 10.5 0.5 9.4Z" fill="url(#fgr)" stroke="#d2a22e" stroke-width="0.9"/><path d="M1 3.6 L12 3.6" stroke="#fff6c8" stroke-width="0.8"/></svg><div class="cb"></div><div class="tx">房产体系</div><div class="dv" style="left:4px;top:2px;height:3px"></div><div class="dv" style="left:4px;top:14px;height:3px"></div><div class="dh" style="left:9px;top:9.5px;width:4px"></div></div>
<div class="a tn" style="top:567.80px"><svg class="a" style="left:0;top:5px" width="9" height="9" viewBox="0 0 9 9"><rect x="0.6" y="0.6" width="7.8" height="7.8" rx="1.6" fill="#ececec" stroke="#b4b4b4" stroke-width="1.2"/><rect x="2" y="4" width="5" height="1" fill="#000"/><rect x="4" y="2" width="1" height="5" fill="#000"/></svg><svg class="a" style="left:13px;top:4.8px" width="13" height="11" viewBox="0 0 13 11"><path d="M0.5 2 Q0.5 0.6 2 0.6 L4.6 0.6 Q5.6 0.6 6.1 1.6 L6.6 2.4 L11.2 2.4 Q12.5 2.4 12.5 3.8 L12.5 9.4 Q12.5 10.5 11.4 10.5 L1.6 10.5 Q0.5 10.5 0.5 9.4Z" fill="url(#fgr)" stroke="#d2a22e" stroke-width="0.9"/><path d="M1 3.6 L12 3.6" stroke="#fff6c8" stroke-width="0.8"/></svg><div class="cb"></div><div class="tx">EHR停用组织部门</div><div class="dv" style="left:4px;top:2px;height:3px"></div><div class="dv" style="left:4px;top:14px;height:3px"></div><div class="dh" style="left:9px;top:9.5px;width:4px"></div></div>
<div class="a tn" style="top:587.60px"><svg class="a" style="left:0;top:5px" width="9" height="9" viewBox="0 0 9 9"><rect x="0.6" y="0.6" width="7.8" height="7.8" rx="1.6" fill="#ececec" stroke="#b4b4b4" stroke-width="1.2"/><rect x="2" y="4" width="5" height="1" fill="#000"/><rect x="4" y="2" width="1" height="5" fill="#000"/></svg><svg class="a" style="left:13px;top:4.8px" width="13" height="11" viewBox="0 0 13 11"><path d="M0.5 2 Q0.5 0.6 2 0.6 L4.6 0.6 Q5.6 0.6 6.1 1.6 L6.6 2.4 L11.2 2.4 Q12.5 2.4 12.5 3.8 L12.5 9.4 Q12.5 10.5 11.4 10.5 L1.6 10.5 Q0.5 10.5 0.5 9.4Z" fill="url(#fgr)" stroke="#d2a22e" stroke-width="0.9"/><path d="M1 3.6 L12 3.6" stroke="#fff6c8" stroke-width="0.8"/></svg><div class="cb"></div><div class="tx">集团总部</div><div class="dv" style="left:4px;top:2px;height:3px"></div><div class="dv" style="left:4px;top:14px;height:3px"></div><div class="dh" style="left:9px;top:9.5px;width:4px"></div></div>
<div class="a tn" style="top:607.40px"><svg class="a" style="left:14px;top:4.5px" width="11" height="12" viewBox="0 0 11 12"><path d="M0.5 0.5 L7.3 0.5 L10.5 3.7 L10.5 11.5 L0.5 11.5Z" fill="#fff4ae" stroke="#a4966c" stroke-width="0.9"/><path d="M7.3 0.5 L7.3 3.7 L10.5 3.7" fill="#f3e6a0" stroke="#a4966c" stroke-width="0.7"/><g fill="#a8a07a"><rect x="2.3" y="4.6" width="6" height="0.9"/><rect x="2.3" y="6.6" width="6" height="0.9"/><rect x="2.3" y="8.6" width="6" height="0.9"/></g></svg><div class="cb"></div><div class="tx">黄坛白板厂房</div><div class="dv" style="left:4px;top:2px;height:15px"></div><div class="dh" style="left:5px;top:9.5px;width:7px"></div></div>
<div class="a tn" style="top:627.20px"><svg class="a" style="left:14px;top:4.5px" width="11" height="12" viewBox="0 0 11 12"><path d="M0.5 0.5 L7.3 0.5 L10.5 3.7 L10.5 11.5 L0.5 11.5Z" fill="#fff4ae" stroke="#a4966c" stroke-width="0.9"/><path d="M7.3 0.5 L7.3 3.7 L10.5 3.7" fill="#f3e6a0" stroke="#a4966c" stroke-width="0.7"/><g fill="#a8a07a"><rect x="2.3" y="4.6" width="6" height="0.9"/><rect x="2.3" y="6.6" width="6" height="0.9"/><rect x="2.3" y="8.6" width="6" height="0.9"/></g></svg><div class="cb"></div><div class="tx">清溪分公司</div><div class="dv" style="left:4px;top:2px;height:15px"></div><div class="dh" style="left:5px;top:9.5px;width:7px"></div></div>
<div class="a tn" style="top:647.00px"><svg class="a" style="left:14px;top:4.5px" width="11" height="12" viewBox="0 0 11 12"><path d="M0.5 0.5 L7.3 0.5 L10.5 3.7 L10.5 11.5 L0.5 11.5Z" fill="#fff4ae" stroke="#a4966c" stroke-width="0.9"/><path d="M7.3 0.5 L7.3 3.7 L10.5 3.7" fill="#f3e6a0" stroke="#a4966c" stroke-width="0.7"/><g fill="#a8a07a"><rect x="2.3" y="4.6" width="6" height="0.9"/><rect x="2.3" y="6.6" width="6" height="0.9"/><rect x="2.3" y="8.6" width="6" height="0.9"/></g></svg><div class="cb"></div><div class="tx">公司本部</div><div class="dv" style="left:4px;top:2px;height:15px"></div><div class="dh" style="left:5px;top:9.5px;width:7px"></div></div>
<div class="a tn" style="top:666.80px"><svg class="a" style="left:14px;top:4.5px" width="11" height="12" viewBox="0 0 11 12"><path d="M0.5 0.5 L7.3 0.5 L10.5 3.7 L10.5 11.5 L0.5 11.5Z" fill="#fff4ae" stroke="#a4966c" stroke-width="0.9"/><path d="M7.3 0.5 L7.3 3.7 L10.5 3.7" fill="#f3e6a0" stroke="#a4966c" stroke-width="0.7"/><g fill="#a8a07a"><rect x="2.3" y="4.6" width="6" height="0.9"/><rect x="2.3" y="6.6" width="6" height="0.9"/><rect x="2.3" y="8.6" width="6" height="0.9"/></g></svg><div class="cb"></div><div class="tx">合资公司</div><div class="dv" style="left:4px;top:2px;height:8px"></div><div class="dh" style="left:5px;top:9.5px;width:7px"></div></div>
<div id="main" class="a"></div>
<div class="a lb" style="left:348px">统计月份:</div>
<div class="a sel" style="left:402px;width:67px"><span class="l">2024</span> 年</div>
<div class="a sel" style="left:472px;width:51px"><span class="l">09</span>月</div>
<div class="a lb" style="left:527px">房号:</div>
<div class="a inp" style="left:560px;width:49px"></div>
<div class="a lb" style="left:612px">身份证/工号:</div>
<div class="a inp" style="left:681px;width:112px"></div>
<div class="a lb" style="left:796px">姓名:</div>
<div class="a inp" style="left:829px;width:111px"></div>
<div class="a lb" style="left:943px">性别:</div>
<div class="a sel" style="left:976px;width:51px">选择</div>
<div class="a lb" style="left:1031px">部门:</div>
<div class="a inp" style="left:1063px;width:112px"></div>
<div class="a lb" style="left:1178px">劳务中介:</div>
<div class="a sel" style="left:1232px;width:93px">选择劳务中介</div>
<div class="a lb" style="left:1329px">房间类型:</div>
<div class="a sel" style="left:1386px;width:72px">请选择</div>
<div class="a btn" style="left:1463px;width:67px">查询</div>
<div class="a btn" style="left:1533px;width:67px">清除</div>
<div class="a" style="left:1604px;top:86px;width:46px;height:25px;border-radius:3px;background:#3aaee2;color:#fff;font-size:12.6px;line-height:25px;text-align:center">导出</div>
<div id="grid" class="a"><div class="a" style="left:0;top:0;width:1500px;height:26px;background:linear-gradient(#eef5fd 0%,#e9f2fb 45%,#e0ecf8 55%,#e6f0fa 75%,#ebf3fc 100%)"></div><div class="a" style="left:0;top:26.0px;width:1489px;height:703.0px;overflow:hidden"><div class="a" style="left:0;top:0;width:26px;height:703.0px;background:#eaf3fb"></div><div class="a" style="left:0;top:0.00px;width:26px;height:24.41px;background:linear-gradient(#eff6fd 0%,#eaf3fc 45%,#e2eef9 60%,#eaf3fc 100%)"></div><div class="a" style="left:0;top:24.41px;width:26px;height:24.41px;background:linear-gradient(#eff6fd 0%,#eaf3fc 45%,#e2eef9 60%,#eaf3fc 100%)"></div><div class="a" style="left:0;top:48.82px;width:26px;height:24.41px;background:linear-gradient(#eff6fd 0%,#eaf3fc 45%,#e2eef9 60%,#eaf3fc 100%)"></div><div class="a" style="left:0;top:73.23px;width:26px;height:24.41px;background:linear-gradient(#eff6fd 0%,#eaf3fc 45%,#e2eef9 60%,#eaf3fc 100%)"></div><div class="a" style="left:0;top:97.64px;width:26px;height:24.41px;background:linear-gradient(#eff6fd 0%,#eaf3fc 45%,#e2eef9 60%,#eaf3fc 100%)"></div><div class="a" style="left:0;top:122.05px;width:26px;height:24.41px;background:linear-gradient(#eff6fd 0%,#eaf3fc 45%,#e2eef9 60%,#eaf3fc 100%)"></div><div class="a" style="left:0;top:146.46px;width:26px;height:24.41px;background:linear-gradient(#eff6fd 0%,#eaf3fc 45%,#e2eef9 60%,#eaf3fc 100%)"></div><div class="a" style="left:0;top:170.87px;width:26px;height:24.41px;background:linear-gradient(#eff6fd 0%,#eaf3fc 45%,#e2eef9 60%,#eaf3fc 100%)"></div><div class="a" style="left:0;top:195.28px;width:26px;height:24.41px;background:linear-gradient(#eff6fd 0%,#eaf3fc 45%,#e2eef9 60%,#eaf3fc 100%)"></div><div class="a" style="left:0;top:219.69px;width:26px;height:24.41px;background:linear-gradient(#eff6fd 0%,#eaf3fc 45%,#e2eef9 60%,#eaf3fc 100%)"></div><div class="a" style="left:0;top:244.10px;width:26px;height:24.41px;background:linear-gradient(#eff6fd 0%,#eaf3fc 45%,#e2eef9 60%,#eaf3fc 100%)"></div><div class="a" style="left:0;top:268.51px;width:26px;height:24.41px;background:linear-gradient(#eff6fd 0%,#eaf3fc 45%,#e2eef9 60%,#eaf3fc 100%)"></div><div class="a" style="left:0;top:292.92px;width:26px;height:24.41px;background:linear-gradient(#eff6fd 0%,#eaf3fc 45%,#e2eef9 60%,#eaf3fc 100%)"></div><div class="a" style="left:0;top:317.33px;width:26px;height:24.41px;background:linear-gradient(#eff6fd 0%,#eaf3fc 45%,#e2eef9 60%,#eaf3fc 100%)"></div><div class="a" style="left:0;top:341.74px;width:26px;height:24.41px;background:linear-gradient(#eff6fd 0%,#eaf3fc 45%,#e2eef9 60%,#eaf3fc 100%)"></div><div class="a" style="left:0;top:366.15px;width:26px;height:24.41px;background:linear-gradient(#eff6fd 0%,#eaf3fc 45%,#e2eef9 60%,#eaf3fc 100%)"></div><div class="a" style="left:0;top:390.56px;width:26px;height:24.41px;background:linear-gradient(#eff6fd 0%,#eaf3fc 45%,#e2eef9 60%,#eaf3fc 100%)"></div><div class="a" style="left:0;top:414.97px;width:26px;height:24.41px;background:linear-gradient(#eff6fd 0%,#eaf3fc 45%,#e2eef9 60%,#eaf3fc 100%)"></div><div class="a" style="left:0;top:439.38px;width:26px;height:24.41px;background:linear-gradient(#eff6fd 0%,#eaf3fc 45%,#e2eef9 60%,#eaf3fc 100%)"></div><div class="a" style="left:0;top:463.79px;width:26px;height:24.41px;background:linear-gradient(#eff6fd 0%,#eaf3fc 45%,#e2eef9 60%,#eaf3fc 100%)"></div><div class="a" style="left:0;top:488.20px;width:26px;height:24.41px;background:linear-gradient(#eff6fd 0%,#eaf3fc 45%,#e2eef9 60%,#eaf3fc 100%)"></div><div class="a" style="left:0;top:512.61px;width:26px;height:24.41px;background:linear-gradient(#eff6fd 0%,#eaf3fc 45%,#e2eef9 60%,#eaf3fc 100%)"></div><div class="a" style="left:0;top:537.02px;width:26px;height:24.41px;background:linear-gradient(#eff6fd 0%,#eaf3fc 45%,#e2eef9 60%,#eaf3fc 100%)"></div><div class="a" style="left:0;top:561.43px;width:26px;height:24.41px;background:linear-gradient(#eff6fd 0%,#eaf3fc 45%,#e2eef9 60%,#eaf3fc 100%)"></div><div class="a" style="left:0;top:585.84px;width:26px;height:24.41px;background:linear-gradient(#eff6fd 0%,#eaf3fc 45%,#e2eef9 60%,#eaf3fc 100%)"></div><div class="a" style="left:0;top:610.25px;width:26px;height:24.41px;background:linear-gradient(#eff6fd 0%,#eaf3fc 45%,#e2eef9 60%,#eaf3fc 100%)"></div><div class="a" style="left:0;top:634.66px;width:26px;height:24.41px;background:linear-gradient(#eff6fd 0%,#eaf3fc 45%,#e2eef9 60%,#eaf3fc 100%)"></div><div class="a" style="left:0;top:659.07px;width:26px;height:24.41px;background:linear-gradient(#eff6fd 0%,#eaf3fc 45%,#e2eef9 60%,#eaf3fc 100%)"></div><div class="a" style="left:0;top:683.48px;width:26px;height:24.41px;background:linear-gradient(#eff6fd 0%,#eaf3fc 45%,#e2eef9 60%,#eaf3fc 100%)"></div><div class="a" style="left:0;top:707.89px;width:26px;height:24.41px;background:linear-gradient(#eff6fd 0%,#eaf3fc 45%,#e2eef9 60%,#eaf3fc 100%)"></div><div class="a" style="left:0;top:0;width:1px;height:703.0px;background:#a9cbe6"></div><div class="a" style="left:27px;top:244.10px;width:1500px;height:24.41px;background:linear-gradient(#e3eefa,#d4e6f6)"></div><div class="a" style="left:0;top:243.10px;width:1500px;height:1px;background:#86b3de"></div><div class="a" style="left:0;top:267.51px;width:1500px;height:1px;background:#86b3de"></div><div class="a" style="left:0;top:23.41px;width:1500px;height:1px;background:#a9cbe6"></div><div class="a" style="left:0;top:47.82px;width:1500px;height:1px;background:#a9cbe6"></div><div class="a" style="left:0;top:72.23px;width:1500px;height:1px;background:#a9cbe6"></div><div class="a" style="left:0;top:96.64px;width:1500px;height:1px;background:#a9cbe6"></div><div class="a" style="left:0;top:121.05px;width:1500px;height:1px;background:#a9cbe6"></div><div class="a" style="left:0;top:145.46px;width:1500px;height:1px;background:#a9cbe6"></div><div class="a" style="left:0;top:169.87px;width:1500px;height:1px;background:#a9cbe6"></div><div class="a" style="left:0;top:194.28px;width:1500px;height:1px;background:#a9cbe6"></div><div class="a" style="left:0;top:218.69px;width:1500px;height:1px;background:#a9cbe6"></div><div class="a" style="left:0;top:291.92px;width:1500px;height:1px;background:#a9cbe6"></div><div class="a" style="left:0;top:316.33px;width:1500px;height:1px;background:#a9cbe6"></div><div class="a" style="left:0;top:340.74px;width:1500px;height:1px;background:#a9cbe6"></div><div class="a" style="left:0;top:365.15px;width:1500px;height:1px;background:#a9cbe6"></div><div class="a" style="left:0;top:389.56px;width:1500px;height:1px;background:#a9cbe6"></div><div class="a" style="left:0;top:413.97px;width:1500px;height:1px;background:#a9cbe6"></div><div class="a" style="left:0;top:438.38px;width:1500px;height:1px;background:#a9cbe6"></div><div class="a" style="left:0;top:462.79px;width:1500px;height:1px;background:#a9cbe6"></div><div class="a" style="left:0;top:487.20px;width:1500px;height:1px;background:#a9cbe6"></div><div class="a" style="left:0;top:511.61px;width:1500px;height:1px;background:#a9cbe6"></div><div class="a" style="left:0;top:536.02px;width:1500px;height:1px;background:#a9cbe6"></div><div class="a" style="left:0;top:560.43px;width:1500px;height:1px;background:#a9cbe6"></div><div class="a" style="left:0;top:584.84px;width:1500px;height:1px;background:#a9cbe6"></div><div class="a" style="left:0;top:609.25px;width:1500px;height:1px;background:#a9cbe6"></div><div class="a" style="left:0;top:633.66px;width:1500px;height:1px;background:#a9cbe6"></div><div class="a" style="left:0;top:658.07px;width:1500px;height:1px;background:#a9cbe6"></div><div class="a" style="left:0;top:682.48px;width:1500px;height:1px;background:#a9cbe6"></div><div class="a" style="left:0;top:706.89px;width:1500px;height:1px;background:#a9cbe6"></div><div class="a" style="left:26px;top:0;width:1px;height:703.0px;background:#a9cbe6"></div><div class="a" style="left:26px;top:243.10px;width:1px;height:25.41px;background:#86b3de"></div><div class="a" style="left:94px;top:0;width:1px;height:703.0px;background:#a9cbe6"></div><div class="a" style="left:94px;top:243.10px;width:1px;height:25.41px;background:#86b3de"></div><div class="a" style="left:189px;top:0;width:1px;height:703.0px;background:#a9cbe6"></div><div class="a" style="left:189px;top:243.10px;width:1px;height:25.41px;background:#86b3de"></div><div class="a" style="left:283px;top:0;width:1px;height:703.0px;background:#a9cbe6"></div><div class="a" style="left:283px;top:243.10px;width:1px;height:25.41px;background:#86b3de"></div><div class="a" style="left:378px;top:0;width:1px;height:703.0px;background:#a9cbe6"></div><div class="a" style="left:378px;top:243.10px;width:1px;height:25.41px;background:#86b3de"></div><div class="a" style="left:454px;top:0;width:1px;height:703.0px;background:#a9cbe6"></div><div class="a" style="left:454px;top:243.10px;width:1px;height:25.41px;background:#86b3de"></div><div class="a" style="left:549px;top:0;width:1px;height:703.0px;background:#a9cbe6"></div><div class="a" style="left:549px;top:243.10px;width:1px;height:25.41px;background:#86b3de"></div><div class="a" style="left:644px;top:0;width:1px;height:703.0px;background:#a9cbe6"></div><div class="a" style="left:644px;top:243.10px;width:1px;height:25.41px;background:#86b3de"></div><div class="a" style="left:738px;top:0;width:1px;height:703.0px;background:#a9cbe6"></div><div class="a" style="left:738px;top:243.10px;width:1px;height:25.41px;background:#86b3de"></div><div class="a" style="left:815px;top:0;width:1px;height:703.0px;background:#a9cbe6"></div><div class="a" style="left:815px;top:243.10px;width:1px;height:25.41px;background:#86b3de"></div><div class="a" style="left:891px;top:0;width:1px;height:703.0px;background:#a9cbe6"></div><div class="a" style="left:891px;top:243.10px;width:1px;height:25.41px;background:#86b3de"></div><div class="a" style="left:968px;top:0;width:1px;height:703.0px;background:#a9cbe6"></div><div class="a" style="left:968px;top:243.10px;width:1px;height:25.41px;background:#86b3de"></div><div class="a" style="left:1045px;top:0;width:1px;height:703.0px;background:#a9cbe6"></div><div class="a" style="left:1045px;top:243.10px;width:1px;height:25.41px;background:#86b3de"></div><div class="a" style="left:1103px;top:0;width:1px;height:703.0px;background:#a9cbe6"></div><div class="a" style="left:1103px;top:243.10px;width:1px;height:25.41px;background:#86b3de"></div><div class="a" style="left:1162px;top:0;width:1px;height:703.0px;background:#a9cbe6"></div><div class="a" style="left:1162px;top:243.10px;width:1px;height:25.41px;background:#86b3de"></div><div class="a" style="left:1238px;top:0;width:1px;height:703.0px;background:#a9cbe6"></div><div class="a" style="left:1238px;top:243.10px;width:1px;height:25.41px;background:#86b3de"></div><div class="a" style="left:1333px;top:0;width:1px;height:703.0px;background:#a9cbe6"></div><div class="a" style="left:1333px;top:243.10px;width:1px;height:25.41px;background:#86b3de"></div><div class="a" style="left:1383px;top:0;width:1px;height:703.0px;background:#a9cbe6"></div><div class="a" style="left:1383px;top:243.10px;width:1px;height:25.41px;background:#86b3de"></div><div class="a" style="left:1432px;top:0;width:1px;height:703.0px;background:#a9cbe6"></div><div class="a" style="left:1432px;top:243.10px;width:1px;height:25.41px;background:#86b3de"></div><div class="a" style="left:1464px;top:0;width:1px;height:703.0px;background:#a9cbe6"></div><div class="a" style="left:1464px;top:243.10px;width:1px;height:25.41px;background:#86b3de"></div><div class="a" style="left:1516px;top:0;width:1px;height:703.0px;background:#a9cbe6"></div><div class="a" style="left:1516px;top:243.10px;width:1px;height:25.41px;background:#86b3de"></div><div class="c rn" style="left:0px;top:0.00px;width:26px"><span class="l">1</span></div><div class="c" style="left:27px;top:0.00px;width:67px">盘江</div><div class="c" style="left:95px;top:0.00px;width:94px"><span class="l">8965422</span></div><div class="c" style="left:190px;top:0.00px;width:93px">共享服务部</div><div class="c" style="left:284px;top:0.00px;width:94px">应付科</div><div class="c" style="left:379px;top:0.00px;width:75px"><span class="l">qq</span>人间</div><div class="c" style="left:455px;top:0.00px;width:94px"><span class="l">0.00</span>元<span class="l">/</span>月<span class="l">/</span>床</div><div class="c" style="left:550px;top:0.00px;width:94px"><span class="l">0.00</span></div><div class="c" style="left:645px;top:0.00px;width:93px"><span class="l">0.00</span></div><div class="c" style="left:739px;top:0.00px;width:76px"><span class="l">2024-09</span></div><div class="c" style="left:816px;top:0.00px;width:75px"><span class="l">2021-11-01</span></div><div class="c" style="left:969px;top:0.00px;width:76px"><span class="l">30</span></div><div class="c" style="left:1046px;top:0.00px;width:57px"><span class="l">0.00</span></div><div class="c" style="left:1163px;top:0.00px;width:75px"><span class="l">0.00</span></div><div class="c" style="left:1239px;top:0.00px;width:94px">和溪园生活区</div><div class="c" style="left:1334px;top:0.00px;width:49px"><span class="l">25</span>栋<span class="l">33</span></div><div class="c" style="left:1384px;top:0.00px;width:48px"><span class="l">C</span>单元</div><div class="c" style="left:1433px;top:0.00px;width:31px"><span class="l">10</span></div><div class="c" style="left:1465px;top:0.00px;width:51px"><span class="l">C1001</span></div><div class="c rn" style="left:0px;top:24.41px;width:26px"><span class="l">2</span></div><div class="c" style="left:27px;top:24.41px;width:67px">张三</div><div class="c" style="left:95px;top:24.41px;width:94px"><span class="l">1111</span></div><div class="c" style="left:190px;top:24.41px;width:93px">销售分公司</div><div class="c" style="left:284px;top:24.41px;width:94px">上海分公司</div><div class="c" style="left:379px;top:24.41px;width:75px">双人间</div><div class="c" style="left:455px;top:24.41px;width:94px"><span class="l">200.00</span>元<span class="l">/</span>月<span class="l">/</span>床</div><div class="c" style="left:550px;top:24.41px;width:94px"><span class="l">200.00</span></div><div class="c" style="left:645px;top:24.41px;width:93px"><span class="l">6.67</span></div><div class="c" style="left:739px;top:24.41px;width:76px"><span class="l">2024-09</span></div><div class="c" style="left:816px;top:24.41px;width:75px"><span class="l">2021-11-01</span></div><div class="c" style="left:969px;top:24.41px;width:76px"><span class="l">30</span></div><div class="c" style="left:1046px;top:24.41px;width:57px"><span class="l">0.00</span></div><div class="c" style="left:1163px;top:24.41px;width:75px"><span class="l">200.00</span></div><div class="c" style="left:1239px;top:24.41px;width:94px">和溪园生活区</div><div class="c" style="left:1334px;top:24.41px;width:49px"><span class="l">25</span>栋<span class="l">33</span></div><div class="c" style="left:1384px;top:24.41px;width:48px"><span class="l">A</span>单元</div><div class="c" style="left:1433px;top:24.41px;width:31px"><span class="l">1</span></div><div class="c" style="left:1465px;top:24.41px;width:51px"><span class="l">01-0101</span></div><div class="c rn" style="left:0px;top:48.82px;width:26px"><span class="l">3</span></div><div class="c" style="left:27px;top:48.82px;width:67px">李明天</div><div class="c" style="left:95px;top:48.82px;width:94px"><span class="l">EX005</span></div><div class="c" style="left:190px;top:48.82px;width:93px">集团总部</div><div class="c" style="left:379px;top:48.82px;width:75px"><span class="l">qq</span>人间</div><div class="c" style="left:455px;top:48.82px;width:94px"><span class="l">0.00</span>元<span class="l">/</span>月<span class="l">/</span>床</div><div class="c" style="left:550px;top:48.82px;width:94px"><span class="l">0.00</span></div><div class="c" style="left:645px;top:48.82px;width:93px"><span class="l">0.00</span></div><div class="c" style="left:739px;top:48.82px;width:76px"><span class="l">2024-09</span></div><div class="c" style="left:816px;top:48.82px;width:75px"><span class="l">2021-10-27</span></div><div class="c" style="left:969px;top:48.82px;width:76px"><span class="l">30</span></div><div class="c" style="left:1046px;top:48.82px;width:57px"><span class="l">0.00</span></div><div class="c" style="left:1163px;top:48.82px;width:75px"><span class="l">0.00</span></div><div class="c" style="left:1239px;top:48.82px;width:94px">和溪园生活区</div><div class="c" style="left:1334px;top:48.82px;width:49px"><span class="l">25</span>栋<span class="l">33</span></div><div class="c" style="left:1384px;top:48.82px;width:48px"><span class="l">A</span>单元</div><div class="c" style="left:1433px;top:48.82px;width:31px"><span class="l">1</span></div><div class="c" style="left:1465px;top:48.82px;width:51px"><span class="l">01-0102</span></div><div class="c rn" style="left:0px;top:73.23px;width:26px"><span class="l">4</span></div><div class="c" style="left:27px;top:73.23px;width:67px">李丽</div><div class="c" style="left:379px;top:73.23px;width:75px">四人间</div><div class="c" style="left:455px;top:73.23px;width:94px"><span class="l">0.00</span>元<span class="l">/</span>月<span class="l">/</span>床</div><div class="c" style="left:550px;top:73.23px;width:94px"><span class="l">0.00</span></div><div class="c" style="left:645px;top:73.23px;width:93px"><span class="l">0.00</span></div><div class="c" style="left:739px;top:73.23px;width:76px"><span class="l">2024-09</span></div><div class="c" style="left:816px;top:73.23px;width:75px"><span class="l">2021-04-20</span></div><div class="c" style="left:969px;top:73.23px;width:76px"><span class="l">30</span></div><div class="c" style="left:1046px;top:73.23px;width:57px"><span class="l">0.00</span></div><div class="c" style="left:1163px;top:73.23px;width:75px"><span class="l">0.00</span></div><div class="c" style="left:1239px;top:73.23px;width:94px">轻工市场</div><div class="c" style="left:1334px;top:73.23px;width:49px"><span class="l">01</span></div><div class="c" style="left:1384px;top:73.23px;width:48px"><span class="l">--</span></div><div class="c" style="left:1433px;top:73.23px;width:31px"><span class="l">4</span></div><div class="c" style="left:1465px;top:73.23px;width:51px"><span class="l">010101</span></div><div class="c rn" style="left:0px;top:97.64px;width:26px"><span class="l">5</span></div><div class="c" style="left:27px;top:97.64px;width:67px"><span class="l">76</span></div><div class="c" style="left:190px;top:97.64px;width:93px">资金管理部</div><div class="c" style="left:284px;top:97.64px;width:94px">融资业务组</div><div class="c" style="left:379px;top:97.64px;width:75px">双人间</div><div class="c" style="left:455px;top:97.64px;width:94px"><span class="l">0.00</span>元<span class="l">/</span>月<span class="l">/</span>床</div><div class="c" style="left:550px;top:97.64px;width:94px"><span class="l">0.00</span></div><div class="c" style="left:645px;top:97.64px;width:93px"><span class="l">0.00</span></div><div class="c" style="left:739px;top:97.64px;width:76px"><span class="l">2024-09</span></div><div class="c" style="left:816px;top:97.64px;width:75px"><span class="l">2021-04-01</span></div><div class="c" style="left:969px;top:97.64px;width:76px"><span class="l">30</span></div><div class="c" style="left:1046px;top:97.64px;width:57px"><span class="l">0.00</span></div><div class="c" style="left:1163px;top:97.64px;width:75px"><span class="l">0.00</span></div><div class="c" style="left:1239px;top:97.64px;width:94px">和溪园生活区</div><div class="c" style="left:1334px;top:97.64px;width:49px"><span class="l">25</span>栋<span class="l">33</span></div><div class="c" style="left:1384px;top:97.64px;width:48px"><span class="l">A</span>单元</div><div class="c" style="left:1433px;top:97.64px;width:31px"><span class="l">2</span></div><div class="c" style="left:1465px;top:97.64px;width:51px"><span class="l">A201</span></div><div class="c rn" style="left:0px;top:122.05px;width:26px"><span class="l">6</span></div><div class="c" style="left:27px;top:122.05px;width:67px">测试</div><div class="c" style="left:95px;top:122.05px;width:94px"><span class="l">11s</span></div><div class="c" style="left:190px;top:122.05px;width:93px">销售分公司</div><div class="c" style="left:284px;top:122.05px;width:94px">北京分公司</div><div class="c" style="left:379px;top:122.05px;width:75px">八人间</div><div class="c" style="left:455px;top:122.05px;width:94px"><span class="l">200.00</span>元<span class="l">/</span>月<span class="l">/</span>间</div><div class="c" style="left:550px;top:122.05px;width:94px"><span class="l">25.00</span></div><div class="c" style="left:645px;top:122.05px;width:93px"><span class="l">0.83</span></div><div class="c" style="left:739px;top:122.05px;width:76px"><span class="l">2024-09</span></div><div class="c" style="left:816px;top:122.05px;width:75px"><span class="l">2020-11-24</span></div><div class="c" style="left:969px;top:122.05px;width:76px"><span class="l">30</span></div><div class="c" style="left:1046px;top:122.05px;width:57px"><span class="l">0.00</span></div><div class="c" style="left:1163px;top:122.05px;width:75px"><span class="l">25.00</span></div><div class="c" style="left:1239px;top:122.05px;width:94px">光电园一期</div><div class="c" style="left:1334px;top:122.05px;width:49px">一号楼</div><div class="c" style="left:1384px;top:122.05px;width:48px"><span class="l">--</span></div><div class="c" style="left:1433px;top:122.05px;width:31px"><span class="l">1</span></div><div class="c" style="left:1465px;top:122.05px;width:51px"><span class="l">101</span></div><div class="c rn" style="left:0px;top:146.46px;width:26px"><span class="l">7</span></div><div class="c" style="left:27px;top:146.46px;width:67px">李四</div><div class="c" style="left:190px;top:146.46px;width:93px">湖州分公司</div><div class="c" style="left:284px;top:146.46px;width:94px">行政部</div><div class="c" style="left:379px;top:146.46px;width:75px">八人间</div><div class="c" style="left:455px;top:146.46px;width:94px"><span class="l">200.00</span>元<span class="l">/</span>月<span class="l">/</span>间</div><div class="c" style="left:550px;top:146.46px;width:94px"><span class="l">25.00</span></div><div class="c" style="left:645px;top:146.46px;width:93px"><span class="l">0.83</span></div><div class="c" style="left:739px;top:146.46px;width:76px"><span class="l">2024-09</span></div><div class="c" style="left:816px;top:146.46px;width:75px"><span class="l">2020-11-24</span></div><div class="c" style="left:969px;top:146.46px;width:76px"><span class="l">30</span></div><div class="c" style="left:1046px;top:146.46px;width:57px"><span class="l">0.00</span></div><div class="c" style="left:1163px;top:146.46px;width:75px"><span class="l">25.00</span></div><div class="c" style="left:1239px;top:146.46px;width:94px">光电园一期</div><div class="c" style="left:1334px;top:146.46px;width:49px">一号楼</div><div class="c" style="left:1384px;top:146.46px;width:48px"><span class="l">--</span></div><div class="c" style="left:1433px;top:146.46px;width:31px"><span class="l">1</span></div><div class="c" style="left:1465px;top:146.46px;width:51px"><span class="l">101</span></div><div class="c rn" style="left:0px;top:170.87px;width:26px"><span class="l">8</span></div><div class="c" style="left:27px;top:170.87px;width:67px">詹济宇</div><div class="c" style="left:95px;top:170.87px;width:94px"><span class="l">17070019</span></div><div class="c" style="left:284px;top:170.87px;width:94px">临时部门</div><div class="c" style="left:379px;top:170.87px;width:75px">八人间</div><div class="c" style="left:455px;top:170.87px;width:94px"><span class="l">200.00</span>元<span class="l">/</span>月<span class="l">/</span>间</div><div class="c" style="left:550px;top:170.87px;width:94px"><span class="l">25.00</span></div><div class="c" style="left:645px;top:170.87px;width:93px"><span class="l">0.83</span></div><div class="c" style="left:739px;top:170.87px;width:76px"><span class="l">2024-09</span></div><div class="c" style="left:816px;top:170.87px;width:75px"><span class="l">2020-11-12</span></div><div class="c" style="left:969px;top:170.87px;width:76px"><span class="l">30</span></div><div class="c" style="left:1046px;top:170.87px;width:57px"><span class="l">0.00</span></div><div class="c" style="left:1163px;top:170.87px;width:75px"><span class="l">25.00</span></div><div class="c" style="left:1239px;top:170.87px;width:94px">光电园一期</div><div class="c" style="left:1334px;top:170.87px;width:49px">一号楼</div><div class="c" style="left:1384px;top:170.87px;width:48px"><span class="l">--</span></div><div class="c" style="left:1433px;top:170.87px;width:31px"><span class="l">1</span></div><div class="c" style="left:1465px;top:170.87px;width:51px"><span class="l">101</span></div><div class="c rn" style="left:0px;top:195.28px;width:26px"><span class="l">9</span></div><div class="c" style="left:27px;top:195.28px;width:67px">渡世</div><div class="c" style="left:190px;top:195.28px;width:93px"><span class="l">EHR</span>停用组织部门</div><div class="c" style="left:284px;top:195.28px;width:94px">注塑车间</div><div class="c" style="left:379px;top:195.28px;width:75px">双人间</div><div class="c" style="left:455px;top:195.28px;width:94px"><span class="l">0.00</span>元<span class="l">/</span>月<span class="l">/</span>间</div><div class="c" style="left:550px;top:195.28px;width:94px"><span class="l">0.00</span></div><div class="c" style="left:645px;top:195.28px;width:93px"><span class="l">0.00</span></div><div class="c" style="left:739px;top:195.28px;width:76px"><span class="l">2024-09</span></div><div class="c" style="left:816px;top:195.28px;width:75px"><span class="l">2020-11-12</span></div><div class="c" style="left:969px;top:195.28px;width:76px"><span class="l">30</span></div><div class="c" style="left:1046px;top:195.28px;width:57px"><span class="l">0.00</span></div><div class="c" style="left:1163px;top:195.28px;width:75px"><span class="l">0.00</span></div><div class="c" style="left:1239px;top:195.28px;width:94px">和溪园生活区</div><div class="c" style="left:1334px;top:195.28px;width:49px"><span class="l">25</span>栋<span class="l">33</span></div><div class="c" style="left:1384px;top:195.28px;width:48px"><span class="l">A</span>单元</div><div class="c" style="left:1433px;top:195.28px;width:31px"><span class="l">1</span></div><div class="c" style="left:1465px;top:195.28px;width:51px"><span class="l">01-0103</span></div><div class="c rn" style="left:0px;top:219.69px;width:26px"><span class="l">10</span></div><div class="c" style="left:27px;top:219.69px;width:67px">吕布</div><div class="c" style="left:95px;top:219.69px;width:94px"><span class="l">66666</span></div><div class="c" style="left:190px;top:219.69px;width:93px">法务部</div><div class="c" style="left:284px;top:219.69px;width:94px">调查组</div><div class="c" style="left:379px;top:219.69px;width:75px">八人间</div><div class="c" style="left:455px;top:219.69px;width:94px"><span class="l">200.00</span>元<span class="l">/</span>月<span class="l">/</span>间</div><div class="c" style="left:550px;top:219.69px;width:94px"><span class="l">25.00</span></div><div class="c" style="left:645px;top:219.69px;width:93px"><span class="l">0.83</span></div><div class="c" style="left:739px;top:219.69px;width:76px"><span class="l">2024-09</span></div><div class="c" style="left:816px;top:219.69px;width:75px"><span class="l">2020-11-12</span></div><div class="c" style="left:969px;top:219.69px;width:76px"><span class="l">30</span></div><div class="c" style="left:1046px;top:219.69px;width:57px"><span class="l">0.00</span></div><div class="c" style="left:1163px;top:219.69px;width:75px"><span class="l">25.00</span></div><div class="c" style="left:1239px;top:219.69px;width:94px">光电园一期</div><div class="c" style="left:1334px;top:219.69px;width:49px">一号楼</div><div class="c" style="left:1384px;top:219.69px;width:48px"><span class="l">--</span></div><div class="c" style="left:1433px;top:219.69px;width:31px"><span class="l">1</span></div><div class="c" style="left:1465px;top:219.69px;width:51px"><span class="l">101</span></div><div class="c rn" style="left:0px;top:244.10px;width:26px"><span class="l">11</span></div><div class="c" style="left:27px;top:244.10px;width:67px;color:#2a5e98">欧阳菲菲</div><div class="c" style="left:95px;top:244.10px;width:94px;color:#2a5e98"><span class="l">123456</span></div><div class="c" style="left:190px;top:244.10px;width:93px;color:#2a5e98">财务管理部</div><div class="c" style="left:284px;top:244.10px;width:94px;color:#2a5e98">财务管理科</div><div class="c" style="left:379px;top:244.10px;width:75px;color:#2a5e98">两室一厅</div><div class="c" style="left:455px;top:244.10px;width:94px;color:#2a5e98"><span class="l">0.00</span>元<span class="l">/</span>月<span class="l">/</span>床</div><div class="c" style="left:550px;top:244.10px;width:94px;color:#2a5e98"><span class="l">0.00</span></div><div class="c" style="left:645px;top:244.10px;width:93px;color:#2a5e98"><span class="l">0.00</span></div><div class="c" style="left:739px;top:244.10px;width:76px;color:#2a5e98"><span class="l">2024-09</span></div><div class="c" style="left:816px;top:244.10px;width:75px;color:#2a5e98"><span class="l">2020-11-10</span></div><div class="c" style="left:969px;top:244.10px;width:76px;color:#2a5e98"><span class="l">30</span></div><div class="c" style="left:1046px;top:244.10px;width:57px;color:#2a5e98"><span class="l">50.00</span></div><div class="c" style="left:1163px;top:244.10px;width:75px;color:#2a5e98"><span class="l">0.00</span></div><div class="c" style="left:1239px;top:244.10px;width:94px;color:#2a5e98">恒大中心</div><div class="c" style="left:1334px;top:244.10px;width:49px;color:#2a5e98"><span class="l">97</span></div><div class="c" style="left:1384px;top:244.10px;width:48px;color:#2a5e98"><span class="l">--</span></div><div class="c" style="left:1433px;top:244.10px;width:31px;color:#2a5e98"><span class="l">3</span></div><div class="c" style="left:1465px;top:244.10px;width:51px;color:#2a5e98"><span class="l">301</span></div><div class="c rn" style="left:0px;top:268.51px;width:26px"><span class="l">12</span></div><div class="c" style="left:27px;top:268.51px;width:67px">欧阳<span class="l">XX</span></div><div class="c" style="left:95px;top:268.51px;width:94px"><span class="l">312</span></div><div class="c" style="left:190px;top:268.51px;width:93px">集团总部</div><div class="c" style="left:284px;top:268.51px;width:94px">财务中心</div><div class="c" style="left:379px;top:268.51px;width:75px">三室一厅</div><div class="c" style="left:455px;top:268.51px;width:94px"><span class="l">500.00</span>元<span class="l">/</span>月<span class="l">/</span>床</div><div class="c" style="left:550px;top:268.51px;width:94px"><span class="l">500.00</span></div><div class="c" style="left:645px;top:268.51px;width:93px"><span class="l">16.67</span></div><div class="c" style="left:739px;top:268.51px;width:76px"><span class="l">2024-09</span></div><div class="c" style="left:816px;top:268.51px;width:75px"><span class="l">2020-11-10</span></div><div class="c" style="left:969px;top:268.51px;width:76px"><span class="l">30</span></div><div class="c" style="left:1046px;top:268.51px;width:57px"><span class="l">0.00</span></div><div class="c" style="left:1163px;top:268.51px;width:75px"><span class="l">500.00</span></div><div class="c" style="left:1239px;top:268.51px;width:94px">恒大中心</div><div class="c" style="left:1334px;top:268.51px;width:49px"><span class="l">98</span>栋</div><div class="c" style="left:1384px;top:268.51px;width:48px"><span class="l">--</span></div><div class="c" style="left:1433px;top:268.51px;width:31px"><span class="l">8</span></div><div class="c" style="left:1465px;top:268.51px;width:51px"><span class="l">801</span></div><div class="c rn" style="left:0px;top:292.92px;width:26px"><span class="l">13</span></div><div class="c" style="left:27px;top:292.92px;width:67px">王黎坚</div><div class="c" style="left:95px;top:292.92px;width:94px"><span class="l">19090002</span></div><div class="c" style="left:190px;top:292.92px;width:93px">得力普乐士办公家具</div><div class="c" style="left:284px;top:292.92px;width:94px">平面设计部</div><div class="c" style="left:379px;top:292.92px;width:75px">套房</div><div class="c" style="left:455px;top:292.92px;width:94px"><span class="l">0.00</span>元<span class="l">/</span>月<span class="l">/</span>床</div><div class="c" style="left:550px;top:292.92px;width:94px"><span class="l">0.00</span></div><div class="c" style="left:645px;top:292.92px;width:93px"><span class="l">0.00</span></div><div class="c" style="left:739px;top:292.92px;width:76px"><span class="l">2024-09</span></div><div class="c" style="left:816px;top:292.92px;width:75px"><span class="l">2020-05-27</span></div><div class="c" style="left:969px;top:292.92px;width:76px"><span class="l">30</span></div><div class="c" style="left:1046px;top:292.92px;width:57px"><span class="l">0.00</span></div><div class="c" style="left:1163px;top:292.92px;width:75px"><span class="l">0.00</span></div><div class="c" style="left:1239px;top:292.92px;width:94px">红岗宿舍</div><div class="c" style="left:1334px;top:292.92px;width:49px"><span class="l">A</span>栋</div><div class="c" style="left:1384px;top:292.92px;width:48px"><span class="l">--</span></div><div class="c" style="left:1433px;top:292.92px;width:31px"><span class="l">2</span></div><div class="c" style="left:1465px;top:292.92px;width:51px"><span class="l">A201</span></div><div class="c rn" style="left:0px;top:317.33px;width:26px"><span class="l">14</span></div><div class="c" style="left:27px;top:317.33px;width:67px">励高威</div><div class="c" style="left:95px;top:317.33px;width:94px"><span class="l">19092003</span></div><div class="c" style="left:190px;top:317.33px;width:93px">制造部</div><div class="c" style="left:284px;top:317.33px;width:94px">资料册车间</div><div class="c" style="left:379px;top:317.33px;width:75px">套房</div><div class="c" style="left:455px;top:317.33px;width:94px"><span class="l">0.00</span>元<span class="l">/</span>月<span class="l">/</span>间</div><div class="c" style="left:550px;top:317.33px;width:94px"><span class="l">0.00</span></div><div class="c" style="left:645px;top:317.33px;width:93px"><span class="l">0.00</span></div><div class="c" style="left:739px;top:317.33px;width:76px"><span class="l">2024-09</span></div><div class="c" style="left:816px;top:317.33px;width:75px"><span class="l">2020-05-27</span></div><div class="c" style="left:969px;top:317.33px;width:76px"><span class="l">30</span></div><div class="c" style="left:1046px;top:317.33px;width:57px"><span class="l">0.00</span></div><div class="c" style="left:1163px;top:317.33px;width:75px"><span class="l">0.00</span></div><div class="c" style="left:1239px;top:317.33px;width:94px">红岗宿舍</div><div class="c" style="left:1334px;top:317.33px;width:49px"><span class="l">A</span>栋</div><div class="c" style="left:1384px;top:317.33px;width:48px"><span class="l">--</span></div><div class="c" style="left:1433px;top:317.33px;width:31px"><span class="l">2</span></div><div class="c" style="left:1465px;top:317.33px;width:51px"><span class="l">A201</span></div><div class="c rn" style="left:0px;top:341.74px;width:26px"><span class="l">15</span></div><div class="c" style="left:27px;top:341.74px;width:67px">张三<span class="l">81</span></div><div class="c" style="left:95px;top:341.74px;width:94px"><span class="l">000200001</span></div><div class="c" style="left:284px;top:341.74px;width:94px">公司本部</div><div class="c" style="left:379px;top:341.74px;width:75px">八人间</div><div class="c" style="left:455px;top:341.74px;width:94px"><span class="l">200.00</span>元<span class="l">/</span>月<span class="l">/</span>床</div><div class="c" style="left:550px;top:341.74px;width:94px"><span class="l">200.00</span></div><div class="c" style="left:645px;top:341.74px;width:93px"><span class="l">6.67</span></div><div class="c" style="left:739px;top:341.74px;width:76px"><span class="l">2024-09</span></div><div class="c" style="left:816px;top:341.74px;width:75px"><span class="l">2020-05-27</span></div><div class="c" style="left:969px;top:341.74px;width:76px"><span class="l">30</span></div><div class="c" style="left:1046px;top:341.74px;width:57px"><span class="l">0.00</span></div><div class="c" style="left:1163px;top:341.74px;width:75px"><span class="l">200.00</span></div><div class="c" style="left:1239px;top:341.74px;width:94px">光电园一期</div><div class="c" style="left:1334px;top:341.74px;width:49px">一号楼</div><div class="c" style="left:1384px;top:341.74px;width:48px"><span class="l">--</span></div><div class="c" style="left:1433px;top:341.74px;width:31px"><span class="l">1</span></div><div class="c" style="left:1465px;top:341.74px;width:51px"><span class="l">101</span></div><div class="c rn" style="left:0px;top:366.15px;width:26px"><span class="l">16</span></div><div class="c" style="left:27px;top:366.15px;width:67px">张三<span class="l">82</span></div><div class="c" style="left:95px;top:366.15px;width:94px"><span class="l">000200002</span></div><div class="c" style="left:284px;top:366.15px;width:94px">公司本部</div><div class="c" style="left:379px;top:366.15px;width:75px">八人间</div><div class="c" style="left:455px;top:366.15px;width:94px"><span class="l">200.00</span>元<span class="l">/</span>月<span class="l">/</span>床</div><div class="c" style="left:550px;top:366.15px;width:94px"><span class="l">200.00</span></div><div class="c" style="left:645px;top:366.15px;width:93px"><span class="l">6.67</span></div><div class="c" style="left:739px;top:366.15px;width:76px"><span class="l">2024-09</span></div><div class="c" style="left:816px;top:366.15px;width:75px"><span class="l">2020-05-27</span></div><div class="c" style="left:969px;top:366.15px;width:76px"><span class="l">30</span></div><div class="c" style="left:1046px;top:366.15px;width:57px"><span class="l">0.00</span></div><div class="c" style="left:1163px;top:366.15px;width:75px"><span class="l">200.00</span></div><div class="c" style="left:1239px;top:366.15px;width:94px">光电园一期</div><div class="c" style="left:1334px;top:366.15px;width:49px">一号楼</div><div class="c" style="left:1384px;top:366.15px;width:48px"><span class="l">--</span></div><div class="c" style="left:1433px;top:366.15px;width:31px"><span class="l">1</span></div><div class="c" style="left:1465px;top:366.15px;width:51px"><span class="l">101</span></div><div class="c rn" style="left:0px;top:390.56px;width:26px"><span class="l">17</span></div><div class="c" style="left:27px;top:390.56px;width:67px">张三<span class="l">83</span></div><div class="c" style="left:95px;top:390.56px;width:94px"><span class="l">000200003</span></div><div class="c" style="left:284px;top:390.56px;width:94px">公司本部</div><div class="c" style="left:379px;top:390.56px;width:75px">八人间</div><div class="c" style="left:455px;top:390.56px;width:94px"><span class="l">200.00</span>元<span class="l">/</span>月<span class="l">/</span>床</div><div class="c" style="left:550px;top:390.56px;width:94px"><span class="l">200.00</span></div><div class="c" style="left:645px;top:390.56px;width:93px"><span class="l">6.67</span></div><div class="c" style="left:739px;top:390.56px;width:76px"><span class="l">2024-09</span></div><div class="c" style="left:816px;top:390.56px;width:75px"><span class="l">2020-05-27</span></div><div class="c" style="left:969px;top:390.56px;width:76px"><span class="l">30</span></div><div class="c" style="left:1046px;top:390.56px;width:57px"><span class="l">100.00</span></div><div class="c" style="left:1163px;top:390.56px;width:75px"><span class="l">100.00</span></div><div class="c" style="left:1239px;top:390.56px;width:94px">光电园一期</div><div class="c" style="left:1334px;top:390.56px;width:49px">一号楼</div><div class="c" style="left:1384px;top:390.56px;width:48px"><span class="l">--</span></div><div class="c" style="left:1433px;top:390.56px;width:31px"><span class="l">1</span></div><div class="c" style="left:1465px;top:390.56px;width:51px"><span class="l">101</span></div><div class="c rn" style="left:0px;top:414.97px;width:26px"><span class="l">18</span></div><div class="c" style="left:27px;top:414.97px;width:67px">张三<span class="l">84</span></div><div class="c" style="left:95px;top:414.97px;width:94px"><span class="l">000200004</span></div><div class="c" style="left:284px;top:414.97px;width:94px">公司本部</div><div class="c" style="left:379px;top:414.97px;width:75px">八人间</div><div class="c" style="left:455px;top:414.97px;width:94px"><span class="l">200.00</span>元<span class="l">/</span>月<span class="l">/</span>床</div><div class="c" style="left:550px;top:414.97px;width:94px"><span class="l">200.00</span></div><div class="c" style="left:645px;top:414.97px;width:93px"><span class="l">6.67</span></div><div class="c" style="left:739px;top:414.97px;width:76px"><span class="l">2024-09</span></div><div class="c" style="left:816px;top:414.97px;width:75px"><span class="l">2020-05-27</span></div><div class="c" style="left:969px;top:414.97px;width:76px"><span class="l">30</span></div><div class="c" style="left:1046px;top:414.97px;width:57px"><span class="l">0.00</span></div><div class="c" style="left:1104px;top:414.97px;width:58px"><span class="l">100.00</span></div><div class="c" style="left:1163px;top:414.97px;width:75px"><span class="l">300.00</span></div><div class="c" style="left:1239px;top:414.97px;width:94px">光电园一期</div><div class="c" style="left:1334px;top:414.97px;width:49px">一号楼</div><div class="c" style="left:1384px;top:414.97px;width:48px"><span class="l">--</span></div><div class="c" style="left:1433px;top:414.97px;width:31px"><span class="l">1</span></div><div class="c" style="left:1465px;top:414.97px;width:51px"><span class="l">101</span></div><div class="c rn" style="left:0px;top:439.38px;width:26px"><span class="l">19</span></div><div class="c" style="left:27px;top:439.38px;width:67px">张三<span class="l">85</span></div><div class="c" style="left:95px;top:439.38px;width:94px"><span class="l">000200005</span></div><div class="c" style="left:284px;top:439.38px;width:94px">公司本部</div><div class="c" style="left:379px;top:439.38px;width:75px">八人间</div><div class="c" style="left:455px;top:439.38px;width:94px"><span class="l">200.00</span>元<span class="l">/</span>月<span class="l">/</span>床</div><div class="c" style="left:550px;top:439.38px;width:94px"><span class="l">200.00</span></div><div class="c" style="left:645px;top:439.38px;width:93px"><span class="l">6.67</span></div><div class="c" style="left:739px;top:439.38px;width:76px"><span class="l">2024-09</span></div><div class="c" style="left:816px;top:439.38px;width:75px"><span class="l">2020-05-27</span></div><div class="c" style="left:969px;top:439.38px;width:76px"><span class="l">30</span></div><div class="c" style="left:1046px;top:439.38px;width:57px"><span class="l">0.00</span></div><div class="c" style="left:1163px;top:439.38px;width:75px"><span class="l">200.00</span></div><div class="c" style="left:1239px;top:439.38px;width:94px">光电园一期</div><div class="c" style="left:1334px;top:439.38px;width:49px">一号楼</div><div class="c" style="left:1384px;top:439.38px;width:48px"><span class="l">--</span></div><div class="c" style="left:1433px;top:439.38px;width:31px"><span class="l">1</span></div><div class="c" style="left:1465px;top:439.38px;width:51px"><span class="l">101</span></div><div class="c rn" style="left:0px;top:463.79px;width:26px"><span class="l">20</span></div><div class="c" style="left:27px;top:463.79px;width:67px">张三<span class="l">86</span></div><div class="c" style="left:95px;top:463.79px;width:94px"><span class="l">000200006</span></div><div class="c" style="left:284px;top:463.79px;width:94px">公司本部</div><div class="c" style="left:379px;top:463.79px;width:75px">八人间</div><div class="c" style="left:455px;top:463.79px;width:94px"><span class="l">200.00</span>元<span class="l">/</span>月<span class="l">/</span>床</div><div class="c" style="left:550px;top:463.79px;width:94px"><span class="l">200.00</span></div><div class="c" style="left:645px;top:463.79px;width:93px"><span class="l">6.67</span></div><div class="c" style="left:739px;top:463.79px;width:76px"><span class="l">2024-09</span></div><div class="c" style="left:816px;top:463.79px;width:75px"><span class="l">2020-05-27</span></div><div class="c" style="left:969px;top:463.79px;width:76px"><span class="l">30</span></div><div class="c" style="left:1046px;top:463.79px;width:57px"><span class="l">0.00</span></div><div class="c" style="left:1163px;top:463.79px;width:75px"><span class="l">200.00</span></div><div class="c" style="left:1239px;top:463.79px;width:94px">光电园一期</div><div class="c" style="left:1334px;top:463.79px;width:49px">一号楼</div><div class="c" style="left:1384px;top:463.79px;width:48px"><span class="l">--</span></div><div class="c" style="left:1433px;top:463.79px;width:31px"><span class="l">1</span></div><div class="c" style="left:1465px;top:463.79px;width:51px"><span class="l">101</span></div><div class="c rn" style="left:0px;top:488.20px;width:26px"><span class="l">21</span></div><div class="c" style="left:27px;top:488.20px;width:67px">张三<span class="l">87</span></div><div class="c" style="left:95px;top:488.20px;width:94px"><span class="l">000200007</span></div><div class="c" style="left:284px;top:488.20px;width:94px">公司本部</div><div class="c" style="left:379px;top:488.20px;width:75px">八人间</div><div class="c" style="left:455px;top:488.20px;width:94px"><span class="l">200.00</span>元<span class="l">/</span>月<span class="l">/</span>床</div><div class="c" style="left:550px;top:488.20px;width:94px"><span class="l">200.00</span></div><div class="c" style="left:645px;top:488.20px;width:93px"><span class="l">6.67</span></div><div class="c" style="left:739px;top:488.20px;width:76px"><span class="l">2024-09</span></div><div class="c" style="left:816px;top:488.20px;width:75px"><span class="l">2020-05-27</span></div><div class="c" style="left:969px;top:488.20px;width:76px"><span class="l">30</span></div><div class="c" style="left:1046px;top:488.20px;width:57px"><span class="l">0.00</span></div><div class="c" style="left:1163px;top:488.20px;width:75px"><span class="l">200.00</span></div><div class="c" style="left:1239px;top:488.20px;width:94px">光电园一期</div><div class="c" style="left:1334px;top:488.20px;width:49px">一号楼</div><div class="c" style="left:1384px;top:488.20px;width:48px"><span class="l">--</span></div><div class="c" style="left:1433px;top:488.20px;width:31px"><span class="l">1</span></div><div class="c" style="left:1465px;top:488.20px;width:51px"><span class="l">101</span></div><div class="c rn" style="left:0px;top:512.61px;width:26px"><span class="l">22</span></div><div class="c" style="left:27px;top:512.61px;width:67px"><span class="l">ces3</span></div><div class="c" style="left:190px;top:512.61px;width:93px"><span class="l">EHR</span>停用组织部门</div><div class="c" style="left:284px;top:512.61px;width:94px"><span class="l">SQE</span>组</div><div class="c" style="left:379px;top:512.61px;width:75px">三人间</div><div class="c" style="left:455px;top:512.61px;width:94px"><span class="l">0.00</span>元<span class="l">/</span>月<span class="l">/</span>床</div><div class="c" style="left:550px;top:512.61px;width:94px"><span class="l">0.00</span></div><div class="c" style="left:645px;top:512.61px;width:93px"><span class="l">0.00</span></div><div class="c" style="left:739px;top:512.61px;width:76px"><span class="l">2024-09</span></div><div class="c" style="left:816px;top:512.61px;width:75px"><span class="l">2019-12-14</span></div><div class="c" style="left:969px;top:512.61px;width:76px"><span class="l">30</span></div><div class="c" style="left:1046px;top:512.61px;width:57px"><span class="l">0.00</span></div><div class="c" style="left:1163px;top:512.61px;width:75px"><span class="l">0.00</span></div><div class="c" style="left:1239px;top:512.61px;width:94px">和溪园生活区</div><div class="c" style="left:1334px;top:512.61px;width:49px"><span class="l">25</span>栋<span class="l">33</span></div><div class="c" style="left:1384px;top:512.61px;width:48px"><span class="l">A</span>单元</div><div class="c" style="left:1433px;top:512.61px;width:31px"><span class="l">6</span></div><div class="c" style="left:1465px;top:512.61px;width:51px"><span class="l">A601</span></div><div class="c rn" style="left:0px;top:537.02px;width:26px"><span class="l">23</span></div><div class="c" style="left:27px;top:537.02px;width:67px"><span class="l">ces2</span></div><div class="c" style="left:95px;top:537.02px;width:94px"><span class="l">ces2</span></div><div class="c" style="left:190px;top:537.02px;width:93px"><span class="l">EHR</span>停用组织部门</div><div class="c" style="left:284px;top:537.02px;width:94px"><span class="l">SQE</span>组</div><div class="c" style="left:379px;top:537.02px;width:75px">三人间</div><div class="c" style="left:455px;top:537.02px;width:94px"><span class="l">0.00</span>元<span class="l">/</span>月<span class="l">/</span>床</div><div class="c" style="left:550px;top:537.02px;width:94px"><span class="l">0.00</span></div><div class="c" style="left:645px;top:537.02px;width:93px"><span class="l">0.00</span></div><div class="c" style="left:739px;top:537.02px;width:76px"><span class="l">2024-09</span></div><div class="c" style="left:816px;top:537.02px;width:75px"><span class="l">2019-10-15</span></div><div class="c" style="left:969px;top:537.02px;width:76px"><span class="l">30</span></div><div class="c" style="left:1046px;top:537.02px;width:57px"><span class="l">0.00</span></div><div class="c" style="left:1163px;top:537.02px;width:75px"><span class="l">0.00</span></div><div class="c" style="left:1239px;top:537.02px;width:94px">和溪园生活区</div><div class="c" style="left:1334px;top:537.02px;width:49px"><span class="l">25</span>栋<span class="l">33</span></div><div class="c" style="left:1384px;top:537.02px;width:48px"><span class="l">A</span>单元</div><div class="c" style="left:1433px;top:537.02px;width:31px"><span class="l">6</span></div><div class="c" style="left:1465px;top:537.02px;width:51px"><span class="l">A601</span></div><div class="c rn" style="left:0px;top:561.43px;width:26px"><span class="l">24</span></div><div class="c" style="left:27px;top:561.43px;width:67px">谭华</div><div class="c" style="left:95px;top:561.43px;width:94px"><span class="l">111</span></div><div class="c" style="left:190px;top:561.43px;width:93px">台州分公司</div><div class="c" style="left:284px;top:561.43px;width:94px">前期部</div><div class="c" style="left:379px;top:561.43px;width:75px">四人间</div><div class="c" style="left:455px;top:561.43px;width:94px"><span class="l">200.00</span>元<span class="l">/</span>月<span class="l">/</span>床</div><div class="c" style="left:550px;top:561.43px;width:94px"><span class="l">200.00</span></div><div class="c" style="left:645px;top:561.43px;width:93px"><span class="l">6.67</span></div><div class="c" style="left:739px;top:561.43px;width:76px"><span class="l">2024-09</span></div><div class="c" style="left:816px;top:561.43px;width:75px"><span class="l">2019-09-26</span></div><div class="c" style="left:969px;top:561.43px;width:76px"><span class="l">30</span></div><div class="c" style="left:1046px;top:561.43px;width:57px"><span class="l">0.00</span></div><div class="c" style="left:1163px;top:561.43px;width:75px"><span class="l">200.00</span></div><div class="c" style="left:1239px;top:561.43px;width:94px">丽水湾</div><div class="c" style="left:1334px;top:561.43px;width:49px"><span class="l">B</span>栋</div><div class="c" style="left:1384px;top:561.43px;width:48px"><span class="l">--</span></div><div class="c" style="left:1433px;top:561.43px;width:31px"><span class="l">1</span></div><div class="c" style="left:1465px;top:561.43px;width:51px"><span class="l">B1-0101</span></div><div class="c rn" style="left:0px;top:585.84px;width:26px"><span class="l">25</span></div><div class="c" style="left:27px;top:585.84px;width:67px">章三力士</div><div class="c" style="left:95px;top:585.84px;width:94px"><span class="l">001236525</span></div><div class="c" style="left:190px;top:585.84px;width:93px">法务部</div><div class="c" style="left:284px;top:585.84px;width:94px">调查组</div><div class="c" style="left:379px;top:585.84px;width:75px">四人间</div><div class="c" style="left:455px;top:585.84px;width:94px"><span class="l">200.00</span>元<span class="l">/</span>月<span class="l">/</span>床</div><div class="c" style="left:550px;top:585.84px;width:94px"><span class="l">200.00</span></div><div class="c" style="left:645px;top:585.84px;width:93px"><span class="l">6.67</span></div><div class="c" style="left:739px;top:585.84px;width:76px"><span class="l">2024-09</span></div><div class="c" style="left:816px;top:585.84px;width:75px"><span class="l">2019-09-26</span></div><div class="c" style="left:969px;top:585.84px;width:76px"><span class="l">30</span></div><div class="c" style="left:1046px;top:585.84px;width:57px"><span class="l">0.00</span></div><div class="c" style="left:1163px;top:585.84px;width:75px"><span class="l">200.00</span></div><div class="c" style="left:1239px;top:585.84px;width:94px">丽水湾</div><div class="c" style="left:1334px;top:585.84px;width:49px"><span class="l">A</span>栋<span class="l">11</span></div><div class="c" style="left:1384px;top:585.84px;width:48px"><span class="l">--</span></div><div class="c" style="left:1433px;top:585.84px;width:31px"><span class="l">1</span></div><div class="c" style="left:1465px;top:585.84px;width:51px"><span class="l">A101</span></div><div class="c rn" style="left:0px;top:610.25px;width:26px"><span class="l">26</span></div><div class="c" style="left:27px;top:610.25px;width:67px"><span class="l">ceshi</span></div><div class="c" style="left:95px;top:610.25px;width:94px"><span class="l">1113332</span></div><div class="c" style="left:190px;top:610.25px;width:93px">湖州分公司</div><div class="c" style="left:284px;top:610.25px;width:94px">工程部</div><div class="c" style="left:379px;top:610.25px;width:75px">双人间</div><div class="c" style="left:455px;top:610.25px;width:94px"><span class="l">0.00</span>元<span class="l">/</span>月<span class="l">/</span>床</div><div class="c" style="left:550px;top:610.25px;width:94px"><span class="l">0.00</span></div><div class="c" style="left:645px;top:610.25px;width:93px"><span class="l">0.00</span></div><div class="c" style="left:739px;top:610.25px;width:76px"><span class="l">2024-09</span></div><div class="c" style="left:816px;top:610.25px;width:75px"><span class="l">2019-09-26</span></div><div class="c" style="left:969px;top:610.25px;width:76px"><span class="l">30</span></div><div class="c" style="left:1046px;top:610.25px;width:57px"><span class="l">0.00</span></div><div class="c" style="left:1163px;top:610.25px;width:75px"><span class="l">0.00</span></div><div class="c" style="left:1239px;top:610.25px;width:94px">和溪园生活区</div><div class="c" style="left:1334px;top:610.25px;width:49px"><span class="l">25</span>栋<span class="l">33</span></div><div class="c" style="left:1384px;top:610.25px;width:48px"><span class="l">A</span>单元</div><div class="c" style="left:1433px;top:610.25px;width:31px"><span class="l">3</span></div><div class="c" style="left:1465px;top:610.25px;width:51px"><span class="l">A301</span></div><div class="c rn" style="left:0px;top:634.66px;width:26px"><span class="l">27</span></div><div class="c" style="left:27px;top:634.66px;width:67px">在做的事</div><div class="c" style="left:190px;top:634.66px;width:93px"><span class="l">EHR</span>停用组织部门</div><div class="c" style="left:284px;top:634.66px;width:94px"><span class="l">SQE</span>组</div><div class="c" style="left:379px;top:634.66px;width:75px"><span class="l">qq</span>人间</div><div class="c" style="left:455px;top:634.66px;width:94px">元<span class="l">/</span>月<span class="l">/</span>床</div><div class="c" style="left:550px;top:634.66px;width:94px"><span class="l">0.00</span></div><div class="c" style="left:645px;top:634.66px;width:93px"><span class="l">0.00</span></div><div class="c" style="left:739px;top:634.66px;width:76px"><span class="l">2024-09</span></div><div class="c" style="left:816px;top:634.66px;width:75px"><span class="l">2019-09-26</span></div><div class="c" style="left:969px;top:634.66px;width:76px"><span class="l">30</span></div><div class="c" style="left:1046px;top:634.66px;width:57px"><span class="l">0.00</span></div><div class="c" style="left:1163px;top:634.66px;width:75px"><span class="l">0.00</span></div><div class="c" style="left:1239px;top:634.66px;width:94px">和溪园生活区</div><div class="c" style="left:1334px;top:634.66px;width:49px"><span class="l">25</span>栋<span class="l">33</span></div><div class="c" style="left:1384px;top:634.66px;width:48px"><span class="l">C</span>单元</div><div class="c" style="left:1433px;top:634.66px;width:31px"><span class="l">8</span></div><div class="c" style="left:1465px;top:634.66px;width:51px"><span class="l">C801</span></div><div class="c rn" style="left:0px;top:659.07px;width:26px"><span class="l">28</span></div><div class="c" style="left:27px;top:659.07px;width:67px">测试<span class="l">11</span></div><div class="c" style="left:190px;top:659.07px;width:93px">销售分公司</div><div class="c" style="left:284px;top:659.07px;width:94px">北京分公司</div><div class="c" style="left:379px;top:659.07px;width:75px">双人间</div><div class="c" style="left:455px;top:659.07px;width:94px"><span class="l">0.00</span>元<span class="l">/</span>月<span class="l">/</span>床</div><div class="c" style="left:550px;top:659.07px;width:94px"><span class="l">0.00</span></div><div class="c" style="left:645px;top:659.07px;width:93px"><span class="l">0.00</span></div><div class="c" style="left:739px;top:659.07px;width:76px"><span class="l">2024-09</span></div><div class="c" style="left:816px;top:659.07px;width:75px"><span class="l">2019-09-25</span></div><div class="c" style="left:969px;top:659.07px;width:76px"><span class="l">30</span></div><div class="c" style="left:1046px;top:659.07px;width:57px"><span class="l">0.00</span></div><div class="c" style="left:1163px;top:659.07px;width:75px"><span class="l">0.00</span></div><div class="c" style="left:1239px;top:659.07px;width:94px">和溪园生活区</div><div class="c" style="left:1334px;top:659.07px;width:49px"><span class="l">25</span>栋<span class="l">33</span></div><div class="c" style="left:1384px;top:659.07px;width:48px"><span class="l">A</span>单元</div><div class="c" style="left:1433px;top:659.07px;width:31px"><span class="l">10</span></div><div class="c" style="left:1465px;top:659.07px;width:51px"><span class="l">A1001</span></div><div class="c rn" style="left:0px;top:683.48px;width:26px"><span class="l">29</span></div><div class="c" style="left:27px;top:683.48px;width:67px">宫本浩隆</div><div class="c" style="left:95px;top:683.48px;width:94px"><span class="l">19041062</span></div><div class="c" style="left:190px;top:683.48px;width:93px">大阪分公司</div><div class="c" style="left:284px;top:683.48px;width:94px">软件设计科</div><div class="c" style="left:379px;top:683.48px;width:75px"><span class="l">qq</span>人间</div><div class="c" style="left:455px;top:683.48px;width:94px"><span class="l">0.00</span>元<span class="l">/</span>月<span class="l">/</span>床</div><div class="c" style="left:550px;top:683.48px;width:94px"><span class="l">0.00</span></div><div class="c" style="left:645px;top:683.48px;width:93px"><span class="l">0.00</span></div><div class="c" style="left:739px;top:683.48px;width:76px"><span class="l">2024-09</span></div><div class="c" style="left:816px;top:683.48px;width:75px"><span class="l">2019-09-02</span></div><div class="c" style="left:969px;top:683.48px;width:76px"><span class="l">30</span></div><div class="c" style="left:1046px;top:683.48px;width:57px"><span class="l">0.00</span></div><div class="c" style="left:1163px;top:683.48px;width:75px"><span class="l">0.00</span></div><div class="c" style="left:1239px;top:683.48px;width:94px">和溪园生活区</div><div class="c" style="left:1334px;top:683.48px;width:49px"><span class="l">25</span>栋<span class="l">33</span></div><div class="c" style="left:1384px;top:683.48px;width:48px"><span class="l">C</span>单元</div><div class="c" style="left:1433px;top:683.48px;width:31px"><span class="l">10</span></div><div class="c" style="left:1465px;top:683.48px;width:51px"><span class="l">C1001</span></div></div><div class="a" style="left:0;top:24px;width:1489px;height:2px;background:#a8c8e4"></div><div class="hc" style="left:27px;width:67px">姓名</div><div class="hc" style="left:95px;width:94px">工号</div><div class="hc" style="left:190px;width:93px">次末级部门</div><div class="hc" style="left:284px;width:94px">末级部门</div><div class="hc" style="left:379px;width:75px">房间类型</div><div class="hc" style="left:455px;width:94px">房租费</div><div class="hc" style="left:550px;width:94px">每人每月分摊费用</div><div class="hc" style="left:645px;width:93px">每人每天分摊费用</div><div class="hc" style="left:739px;width:76px">结算月份</div><div class="hc" style="left:816px;width:75px">入住时间</div><div class="hc" style="left:892px;width:76px">退宿时间</div><div class="hc" style="left:969px;width:76px">结算天数</div><div class="hc" style="left:1046px;width:57px">补贴费用</div><div class="hc" style="left:1104px;width:58px">额外费用</div><div class="hc" style="left:1163px;width:75px">合计扣款</div><div class="hc" style="left:1239px;width:94px">地理位置</div><div class="hc" style="left:1334px;width:49px">楼栋号</div><div class="hc" style="left:1384px;width:48px">单元</div><div class="hc" style="left:1433px;width:31px">楼层</div><div class="hc" style="left:1465px;width:45px">房间号</div><div class="a" style="left:26px;top:0;width:1px;height:26px;background:#c5daea"></div><div class="a" style="left:94px;top:0;width:1px;height:26px;background:#c5daea"></div><div class="a" style="left:189px;top:0;width:1px;height:26px;background:#c5daea"></div><div class="a" style="left:283px;top:0;width:1px;height:26px;background:#c5daea"></div><div class="a" style="left:378px;top:0;width:1px;height:26px;background:#c5daea"></div><div class="a" style="left:454px;top:0;width:1px;height:26px;background:#c5daea"></div><div class="a" style="left:549px;top:0;width:1px;height:26px;background:#c5daea"></div><div class="a" style="left:644px;top:0;width:1px;height:26px;background:#c5daea"></div><div class="a" style="left:738px;top:0;width:1px;height:26px;background:#c5daea"></div><div class="a" style="left:815px;top:0;width:1px;height:26px;background:#c5daea"></div><div class="a" style="left:891px;top:0;width:1px;height:26px;background:#c5daea"></div><div class="a" style="left:968px;top:0;width:1px;height:26px;background:#c5daea"></div><div class="a" style="left:1045px;top:0;width:1px;height:26px;background:#c5daea"></div><div class="a" style="left:1103px;top:0;width:1px;height:26px;background:#c5daea"></div><div class="a" style="left:1162px;top:0;width:1px;height:26px;background:#c5daea"></div><div class="a" style="left:1238px;top:0;width:1px;height:26px;background:#c5daea"></div><div class="a" style="left:1333px;top:0;width:1px;height:26px;background:#c5daea"></div><div class="a" style="left:1383px;top:0;width:1px;height:26px;background:#c5daea"></div><div class="a" style="left:1432px;top:0;width:1px;height:26px;background:#c5daea"></div><div class="a" style="left:1464px;top:0;width:1px;height:26px;background:#c5daea"></div><div class="a" style="left:1489px;top:26.0px;width:9px;height:703.0px;background:#edf4fb"></div><div class="a" style="left:1490px;top:26.0px;width:7px;height:201px;border-radius:4px;background:#b5b5b5"></div><div class="a" style="left:0;top:729px;width:1489px;height:9px;background:#edf4fb"></div><div class="a" style="left:1px;top:728.5px;width:1051px;height:7px;border-radius:4px;background:#b5b5b5"></div><div class="a" style="left:1489px;top:729px;width:9px;height:9px;background:#fff"></div><div class="a" style="left:0;top:737px;width:1500px;height:26px;border-top:1px solid #b7d2e8;background:linear-gradient(#eef5fc 0%,#e6f0fa 50%,#dbe9f6 60%,#eaf3fc 100%)"></div></div>
<svg class="a" style="left:1005px;top:860px" width="30" height="7" viewBox="0 0 30 7"><g fill="#b9cde0"><rect x="1" y="0.5" width="1.3" height="6"/><path d="M8.5 0.5 L3 3.5 L8.5 6.5Z"/><path d="M22.5 0.5 L17.5 3.5 L22.5 6.5Z" opacity="0.8"/><path d="M27.5 0.5 L22.5 3.5 L27.5 6.5Z"/></g></svg>
<div class="a" style="left:1038px;top:855px;width:1px;height:16px;background:#c9d6e2"></div>
<div class="a" style="left:1046px;top:856px;width:17px;height:16px;border:1px solid #555;background:#fff;font-size:10px;line-height:14px;padding-left:3px">1</div>
<div class="a" style="left:1066px;top:855px;line-height:16px;font-size:12px;color:#2b6ba8;white-space:nowrap">共 2 页</div>
<div class="a" style="left:1103px;top:855px;width:1px;height:16px;background:#c9d6e2"></div>
<svg class="a" style="left:1111px;top:860px" width="28" height="7" viewBox="0 0 28 7"><g fill="#3f8bd0"><path d="M0.5 0.5 L5.5 3.5 L0.5 6.5Z"/><path d="M5 0.5 L10 3.5 L5 6.5Z" fill="#8ab8e2"/><path d="M19 0.5 L24.5 3.5 L19 6.5Z"/><rect x="25.2" y="0.5" width="1.3" height="6"/></g></svg>
<style>.pgsel:after{top:2.5px;right:7px}</style><div class="a sel pgsel" style="left:1143px;top:855px;width:51px;height:16px;line-height:14px;font-size:10px;padding-left:8px;border-color:#555">100</div>
<div class="a" style="left:1700px;top:856px;width:143px;text-align:right;line-height:17px;font-size:11.6px;color:#2b5d8a;white-space:nowrap">1 - 100 &nbsp; 共 143 条</div>
</body></html>
